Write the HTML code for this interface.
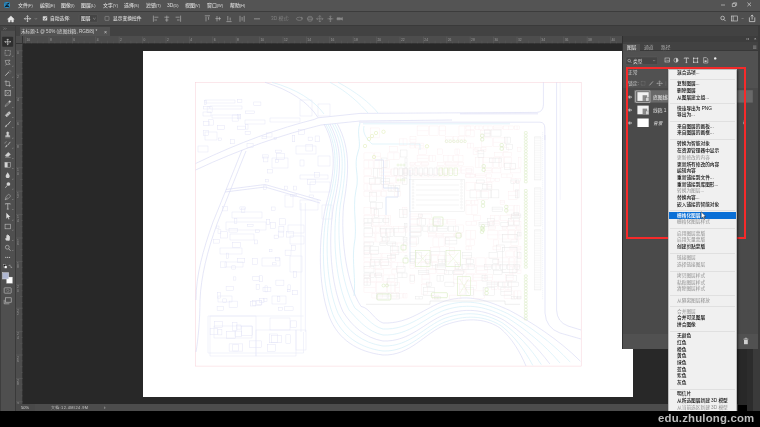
<!DOCTYPE html><html lang="zh"><head><meta charset="utf-8"><title>Photoshop</title>
<style>
*{box-sizing:border-box;margin:0;padding:0}
html,body{width:760px;height:427px;overflow:hidden;background:#000}
body{position:relative;font-family:"Liberation Sans","Noto Sans CJK SC",sans-serif;font-size:4.75px;color:#d6d6d6;line-height:1}
.abs{position:absolute}
svg{will-change:transform}
.t{position:absolute;white-space:nowrap;line-height:1;will-change:transform}
#menubar{left:0;top:0;width:760px;height:10.6px;background:#545454}
#optbar{left:0;top:10.6px;width:760px;height:15.6px;background:#4f4f4f;border-top:0.6px solid #3c3c3c;border-bottom:0.6px solid #3a3a3a}
#tabbar{left:15.6px;top:26.2px;width:744.4px;height:10px;background:#424242}
#tab{left:19.5px;top:26.6px;width:90.5px;height:9.6px;background:#535353}
#hruler{left:15.6px;top:36.2px;width:606.6px;height:7.4px;background:#4d4d4d;border-bottom:0.5px solid #333}
#vruler{left:15.6px;top:36.2px;width:7.4px;height:368px;background:#4d4d4d;border-right:0.5px solid #333}
#toolbar{left:0;top:26.2px;width:15.6px;height:385px;background:#4f4f4f;border-right:0.6px solid #3a3a3a;border-left:0.9px solid #3e3e3e}
#canvas{left:23px;top:43.6px;width:737px;height:361px;background:#282828}
#doc{left:142.6px;top:50.8px;width:490.9px;height:346.6px;background:#fff}
#status{left:15.6px;top:404.1px;width:722px;height:7.2px;background:#4c4c4c}
#black{left:0;top:411.3px;width:760px;height:16px;background:#000}
#panel{left:622.3px;top:36.2px;width:136px;height:313px;background:#4a4a4a;border-left:0.6px solid #303030}
#rstrip{left:758.3px;top:26.2px;width:2px;height:385px;background:#3a3a3a}
#ctx{left:667.8px;top:69.2px;width:69.6px;height:343px;background:#f0f0f0;border:0.4px solid #bdbdbd;color:#0c0c0c;box-shadow:1.2px 1.2px 2px rgba(0,0,0,.55)}
#ctx .i{will-change:transform;position:absolute;left:7.9px;white-space:nowrap;font-size:4.7px;font-weight:500;line-height:6.68px;height:6.68px}
#ctx .g{color:#8e8e8e;font-weight:400}
#ctx .s{position:absolute;left:1.4px;right:1.4px;height:0.6px;background:#e0e0e0}
#ctx .hl{position:absolute;left:0.6px;right:0.6px;background:#0a6fd6;height:6.5px}
</style></head><body>
<div class="abs" id="canvas"></div>
<div class="abs" id="doc"></div>
<svg class="abs" style="left:0;top:0;opacity:0.56" width="760" height="427" viewBox="0 0 760 427" fill="none">
<rect x="195.6" y="82.3" width="385.6" height="283.8" stroke="#f0a8b8" stroke-width="0.5"/>
<g stroke-width="0.6">
<path d="M195.6 163.5 C240 142 280 128 314 119.5 L318 117.8 L360 113.4 L537 112.4 Q543 112 543.4 105 L543.4 82.3" stroke="#b4b7ea"/>
<path d="M195.6 170 C240 149 285 134 321 125 L360 121 L452 120" stroke="#b4b7ea"/>
<path d="M460 113.8 L538 113.8" stroke="#b4b7ea"/>
<path d="M265 82.3 C290 90 308 102 318 117.5" stroke="#b4b7ea"/>
<path d="M272 82.3 C296 89 314 100 324 114" stroke="#a8def2"/>
<path d="M330 82.3 C348 92 360 104 368 113" stroke="#a8def2"/>
<path d="M338 82.3 C356 92 370 103 378 113" stroke="#a8def2"/>
<path d="M324.0 124 C338.0 150 334.0 175 326.0 205 C318.0 240 318.0 285 329.0 316.0 C338.0 340.0 358.0 352.0 383 355.0 C410 356.0 425 333.0 445 325.0 C470 316.0 488 320.0 500.0 328.0 C512.0 338.0 520.0 352.0 526.0 366.0" stroke="#b4b7ea"/>
<path d="M325.7 124 C339.7 150 335.8 175 328.2 205 C320.8 240 321.6 285 333.0 314.8 C342.0 336.0 360.0 348.0 383 351.0 C410 352.0 425 329.8 445 322.0 C470 313.2 488 317.6 501.2 325.8 C514.4 336.0 524.8 350.4 532.8 365.4" stroke="#a8def2"/>
<path d="M327.8 124 C341.8 150 338.1 175 330.9 205 C324.3 240 326.1 285 338.0 313.3 C347.0 331.0 362.5 343.0 383 346.0 C410 347.0 425 325.8 445 318.2 C470 309.7 488 314.6 502.7 323.1 C517.4 333.5 530.8 348.4 541.3 364.6" stroke="#a8def2"/>
<path d="M329.9 124 C343.9 150 340.3 175 333.7 205 C327.8 240 330.6 285 343.0 311.8 C352.0 326.0 365.0 338.0 383 341.0 C410 342.0 425 321.8 445 314.5 C470 306.2 488 311.6 504.2 320.3 C520.4 331.0 536.8 346.4 549.8 363.9" stroke="#b4b7ea"/>
<path d="M332.4 124 C346.4 150 343.0 175 337.0 205 C332.0 240 336.0 285 349.0 310.0 C358.0 320.0 368.0 332.0 383 335.0 C410 336.0 425 317.0 445 310.0 C470 302.0 488 308.0 506.0 317.0 C524.0 328.0 544.0 344.0 560.0 363.0" stroke="#a8def2"/>
<path d="M334.9 124 C348.9 150 345.7 175 340.3 205 C336.2 240 341.4 285 355.0 308.2 C364.0 314.0 371.0 326.0 383 329.0 C410 330.0 425 312.2 445 305.5 C470 297.8 488 304.4 507.8 313.7 C527.6 325.0 551.2 341.6 570.2 362.1" stroke="#a8def2"/>
<path d="M337.4 124 C351.4 150 348.4 175 343.6 205 C340.4 240 346.8 285 361.0 306.4 C370.0 308.0 374.0 320.0 383 323.0 C410 324.0 425 307.4 445 301.0 C470 293.6 488 300.8 509.6 310.4 C531.2 322.0 558.4 339.2 580.4 361.2" stroke="#b4b7ea"/>
<path d="M242 150 C232 175 222 200 213 222 C203 250 196 275 196 300" stroke="#b4b7ea"/>
<path d="M246 151 C236 176 226 201 217 224 C207 252 201 277 200 300 C200 320 198 340 196 352" stroke="#b4b7ea"/>
<path d="M226 189.5 L265 184.5 L321 200.5" stroke="#b4b7ea"/>
<path d="M225 192 L265 187 L320 203" stroke="#b4b7ea"/>
<path d="M556.6 82.3 L556.6 310 Q557 322 568 326 L581 330" stroke="#b4b7ea"/>
<path d="M560.2 82.3 L560.2 200" stroke="#b4b7ea" stroke-width="0.3"/>
<path d="M545 135 L545 313 Q546 328 560 333 L581 339" stroke="#b4b7ea"/>
<path d="M359 122.2 L540 122.2 Q544.8 122.4 544.8 128 L544.8 140" stroke="#b4b7ea"/>
<path d="M363 123.8 L510 123.8" stroke="#a8def2"/>
<path d="M366 304.3 L430 304.3 L430 301 L505 301 L505 304.3 L520 304.3" stroke="#cccccc"/>
<path d="M360 123 C356 135 362 142 358 152 C353 166 360 176 356 190 C352 210 358 226 354 246 C352 262 356 280 354 296" stroke="#a8def2" stroke-width="0.7"/>
<path d="M364 126 C362 134 368 140 372 144 L420 144 L420 150" stroke="#a8def2" stroke-width="0.6"/>
<path d="M375 160 L383.5 160 L383.5 188 L398 188 L398 197 L386 197 L386 215" stroke="#b4c8ee" stroke-width="0.8"/>
<path d="M410 170 L410 262" stroke="#b4c8ee" stroke-width="0.6"/>
</g>
<g stroke="#c6c9ee" stroke-width="0.4">
<rect x="205" y="100" width="30" height="3"/>
<rect x="210" y="106" width="32" height="3"/>
<rect x="203" y="112" width="8" height="4"/>
<rect x="212" y="115" width="28" height="3"/>
<rect x="245" y="120" width="20" height="4"/>
<rect x="270" y="118" width="30" height="4"/>
<rect x="300" y="100" width="12" height="16"/>
<rect x="318" y="104" width="12" height="12"/>
<rect x="205" y="132" width="12" height="8"/>
<rect x="198" y="146" width="10" height="6"/>
<rect x="272" y="158" width="16" height="10"/>
<rect x="296" y="146" width="20" height="8"/>
<rect x="300" y="160" width="4" height="6"/>
<rect x="318" y="156" width="12" height="10"/>
<rect x="300" y="175" width="28" height="4"/>
<rect x="310" y="182" width="20" height="10"/>
<rect x="285" y="195" width="8" height="12"/>
<rect x="300" y="200" width="18" height="10"/>
<rect x="322" y="205" width="10" height="14"/>
<rect x="232" y="212" width="30" height="6"/>
<rect x="226" y="222" width="40" height="8"/>
<rect x="230" y="234" width="24" height="6"/>
<rect x="288" y="225" width="16" height="8"/>
<rect x="290" y="236" width="14" height="8"/>
<rect x="220" y="248" width="22" height="6"/>
<rect x="262" y="258" width="18" height="8"/>
<rect x="290" y="256" width="12" height="16"/>
<rect x="225" y="262" width="18" height="5"/>
<rect x="218" y="296" width="14" height="6"/>
<rect x="272" y="296" width="14" height="8"/>
<rect x="210" y="316" width="46" height="40"/>
<rect x="256" y="330" width="40" height="26"/>
<rect x="270" y="318" width="20" height="12"/>
<rect x="296" y="330" width="10" height="20"/>
<rect x="214" y="326" width="38" height="12"/>
<rect x="237.6" y="99.7" width="4.3" height="2.6"/>
<rect x="203.3" y="121.6" width="5.8" height="3.6"/>
<rect x="204.2" y="100.5" width="2.3" height="3.9"/>
<rect x="207.1" y="106.8" width="5.0" height="5.6"/>
<rect x="232.1" y="115.0" width="6.4" height="6.1"/>
<rect x="245.6" y="111.0" width="8.8" height="2.2"/>
<rect x="218.2" y="138.0" width="3.0" height="2.5"/>
<rect x="237.5" y="114.4" width="3.3" height="4.5"/>
<rect x="203.3" y="106.7" width="5.8" height="2.3"/>
<rect x="217.4" y="125.4" width="6.8" height="3.8"/>
<rect x="245.1" y="131.4" width="5.2" height="3.3"/>
<rect x="230.6" y="139.3" width="3.7" height="4.5"/>
<rect x="253.8" y="102.0" width="7.1" height="3.2"/>
<rect x="208.7" y="119.8" width="4.9" height="5.3"/>
<rect x="245.7" y="124.2" width="2.3" height="4.9"/>
<rect x="237.5" y="126.1" width="8.1" height="3.3"/>
<rect x="247.0" y="143.3" width="6.1" height="4.0"/>
<rect x="203.4" y="130.5" width="5.3" height="4.9"/>
<rect x="305.9" y="144.7" width="6.5" height="6.3"/>
<rect x="263.2" y="157.0" width="4.7" height="4.9"/>
<rect x="265.4" y="179.4" width="3.2" height="2.5"/>
<rect x="284.3" y="186.1" width="2.9" height="3.1"/>
<rect x="293.6" y="186.1" width="2.6" height="3.9"/>
<rect x="276.6" y="153.5" width="7.7" height="5.7"/>
<rect x="315.1" y="136.0" width="4.5" height="5.8"/>
<rect x="275.2" y="159.5" width="3.2" height="3.0"/>
<rect x="262.2" y="154.9" width="6.1" height="3.1"/>
<rect x="314.8" y="172.7" width="4.6" height="4.4"/>
<rect x="298.8" y="129.6" width="5.6" height="4.7"/>
<rect x="307.2" y="179.2" width="8.3" height="5.4"/>
<rect x="267.7" y="169.3" width="4.7" height="3.7"/>
<rect x="274.0" y="137.3" width="2.4" height="2.3"/>
<rect x="262.0" y="136.6" width="4.4" height="2.2"/>
<rect x="263.5" y="185.8" width="2.7" height="3.6"/>
<rect x="275.5" y="150.1" width="6.3" height="2.6"/>
<rect x="309.1" y="195.0" width="4.5" height="2.5"/>
<rect x="266.7" y="132.9" width="5.3" height="4.1"/>
<rect x="308.1" y="137.1" width="4.4" height="3.1"/>
<rect x="292.6" y="135.7" width="2.2" height="6.1"/>
<rect x="290.6" y="194.4" width="5.8" height="2.1"/>
<rect x="232.4" y="242.4" width="8.0" height="5.0"/>
<rect x="256.1" y="284.2" width="3.2" height="5.3"/>
<rect x="278.3" y="307.5" width="4.3" height="3.0"/>
<rect x="275.9" y="280.1" width="8.0" height="5.5"/>
<rect x="241.3" y="208.0" width="3.6" height="4.2"/>
<rect x="233.7" y="276.9" width="2.2" height="3.2"/>
<rect x="284.4" y="306.8" width="8.7" height="3.9"/>
<rect x="229.0" y="228.5" width="8.7" height="3.6"/>
<rect x="263.6" y="298.7" width="3.4" height="2.9"/>
<rect x="263.0" y="287.3" width="7.9" height="4.1"/>
<rect x="287.9" y="284.9" width="2.6" height="4.8"/>
<rect x="226.1" y="286.2" width="7.3" height="4.1"/>
<rect x="291.4" y="245.2" width="4.3" height="5.4"/>
<rect x="270.8" y="222.2" width="4.8" height="6.1"/>
<rect x="287.2" y="289.2" width="2.9" height="2.6"/>
<rect x="293.3" y="271.7" width="3.0" height="5.6"/>
<rect x="222.7" y="206.5" width="4.5" height="4.4"/>
<rect x="252.7" y="300.4" width="8.8" height="4.8"/>
<rect x="278.9" y="226.4" width="5.0" height="5.7"/>
<rect x="231.8" y="265.8" width="3.8" height="3.3"/>
<rect x="222.8" y="298.9" width="3.8" height="3.8"/>
<rect x="259.6" y="298.2" width="4.5" height="4.0"/>
<rect x="252.7" y="258.7" width="4.9" height="5.9"/>
<rect x="247.4" y="224.2" width="5.7" height="2.1"/>
<rect x="226.5" y="253.1" width="2.0" height="5.4"/>
<rect x="237.7" y="258.2" width="7.1" height="4.4"/>
<rect x="220.5" y="261.9" width="5.9" height="5.4"/>
<rect x="275.5" y="257.7" width="3.7" height="3.2"/>
<rect x="285.1" y="250.1" width="5.9" height="5.3"/>
<rect x="252.8" y="276.2" width="6.3" height="4.2"/>
<rect x="250.6" y="301.7" width="5.2" height="4.3"/>
<rect x="286.5" y="231.3" width="6.9" height="5.8"/>
<rect x="279.3" y="218.8" width="5.9" height="6.1"/>
<rect x="218.0" y="229.8" width="2.9" height="3.9"/>
<rect x="277.4" y="296.6" width="2.5" height="4.9"/>
<rect x="266.7" y="219.6" width="3.1" height="5.1"/>
<rect x="229.1" y="301.1" width="8.2" height="6.2"/>
<rect x="292.4" y="290.7" width="4.8" height="4.1"/>
<rect x="254.7" y="240.0" width="3.1" height="3.9"/>
<rect x="271.7" y="207.0" width="3.4" height="3.4"/>
<rect x="213.4" y="239.2" width="5.9" height="3.9"/>
<rect x="217.1" y="306.3" width="6.4" height="4.2"/>
<rect x="220.2" y="231.8" width="7.5" height="6.2"/>
<rect x="234.6" y="218.2" width="2.3" height="5.3"/>
<rect x="278.4" y="231.1" width="5.0" height="5.9"/>
<rect x="259.3" y="275.8" width="3.0" height="6.0"/>
<rect x="269.4" y="249.6" width="2.6" height="2.2"/>
<rect x="265.0" y="285.9" width="2.5" height="6.0"/>
<rect x="217.6" y="292.4" width="2.6" height="5.7"/>
<rect x="256.7" y="300.9" width="5.2" height="3.5"/>
<rect x="255.3" y="229.9" width="3.9" height="2.6"/>
<rect x="216.2" y="226.0" width="2.8" height="2.7"/>
<rect x="274.1" y="235.1" width="4.2" height="3.3"/>
<rect x="239.9" y="206.9" width="5.5" height="2.8"/>
<rect x="272.3" y="262.8" width="3.8" height="2.1"/>
<rect x="290.5" y="320.9" width="5.9" height="6.8"/>
<rect x="249.5" y="340.9" width="12.2" height="6.5"/>
<rect x="267.8" y="344.6" width="7.9" height="6.9"/>
<rect x="269.8" y="334.0" width="7.4" height="8.8"/>
<rect x="214.6" y="321.6" width="8.0" height="6.0"/>
<rect x="232.3" y="322.2" width="4.7" height="8.3"/>
<rect x="285.9" y="334.8" width="4.8" height="8.9"/>
<rect x="235.0" y="331.1" width="6.8" height="5.4"/>
<rect x="232.8" y="344.4" width="5.6" height="6.6"/>
<rect x="229.1" y="343.9" width="13.7" height="7.2"/>
<rect x="210.1" y="328.7" width="7.1" height="6.1"/>
<rect x="226.7" y="331.7" width="8.7" height="6.9"/>
<rect x="217.9" y="329.4" width="4.0" height="5.5"/>
<rect x="236.6" y="325.0" width="4.4" height="4.1"/>
<rect x="271.7" y="335.7" width="9.9" height="7.1"/>
<rect x="241.5" y="326.1" width="11.2" height="9.1"/>
<path d="M301 203 V332 M305.4 203 V332 M303.5 316 H208 V353 H303.5 V332"/>
</g>
<rect x="370.2" y="128.0" width="9.1" height="9.9" stroke="#f5d9de" stroke-width="0.35"/>
<rect x="399.4" y="138.9" width="7.6" height="6.5" stroke="#f5d9de" stroke-width="0.35"/>
<path d="M403.2 138.9 V145.4" stroke="#f5d9de" stroke-width="0.35"/>
<rect x="389.3" y="146.4" width="7.9" height="5.5" stroke="#f5d9de" stroke-width="0.35"/>
<rect x="364.0" y="152.9" width="9.3" height="6.7" stroke="#f5d9de" stroke-width="0.35"/>
<rect x="374.3" y="152.9" width="6.0" height="6.7" stroke="#f5d9de" stroke-width="0.35"/>
<path d="M374.3 156.3 H380.3" stroke="#f5d9de" stroke-width="0.35"/>
<rect x="387.9" y="152.9" width="11.8" height="6.7" stroke="#f5d9de" stroke-width="0.35"/>
<path d="M393.8 152.9 V159.7" stroke="#f5d9de" stroke-width="0.35"/>
<rect x="364.0" y="160.7" width="9.1" height="7.3" stroke="#f5d9de" stroke-width="0.35"/>
<path d="M368.6 160.7 V168.0" stroke="#f5d9de" stroke-width="0.35"/>
<rect x="374.1" y="160.7" width="9.9" height="7.3" stroke="#f5d9de" stroke-width="0.35"/>
<path d="M379.1 160.7 V168.0" stroke="#f5d9de" stroke-width="0.35"/>
<rect x="385.1" y="160.7" width="4.5" height="7.3" stroke="#f5d9de" stroke-width="0.35"/>
<rect x="364.0" y="169.0" width="7.7" height="6.3" stroke="#f5d9de" stroke-width="0.35"/>
<rect x="379.3" y="169.0" width="11.5" height="6.3" stroke="#f5d9de" stroke-width="0.35"/>
<path d="M379.3 172.1 H390.8" stroke="#f5d9de" stroke-width="0.35"/>
<rect x="391.8" y="169.0" width="11.7" height="6.3" stroke="#f5d9de" stroke-width="0.35"/>
<path d="M397.7 169.0 V175.3" stroke="#f5d9de" stroke-width="0.35"/>
<rect x="404.6" y="169.0" width="2.4" height="6.3" stroke="#f5d9de" stroke-width="0.35"/>
<path d="M405.8 169.0 V175.3" stroke="#f5d9de" stroke-width="0.35"/>
<rect x="364.0" y="176.3" width="11.6" height="6.7" stroke="#f5d9de" stroke-width="0.35"/>
<rect x="385.7" y="176.3" width="9.6" height="6.7" stroke="#f5d9de" stroke-width="0.35"/>
<rect x="396.3" y="176.3" width="7.9" height="6.7" stroke="#f5d9de" stroke-width="0.35"/>
<path d="M400.3 176.3 V182.9" stroke="#f5d9de" stroke-width="0.35"/>
<rect x="364.0" y="183.9" width="6.4" height="6.2" stroke="#f5d9de" stroke-width="0.35"/>
<path d="M367.2 183.9 V190.1" stroke="#f5d9de" stroke-width="0.35"/>
<rect x="371.4" y="183.9" width="10.7" height="6.2" stroke="#f5d9de" stroke-width="0.35"/>
<rect x="383.1" y="183.9" width="10.7" height="6.2" stroke="#f5d9de" stroke-width="0.35"/>
<rect x="364.0" y="191.1" width="7.0" height="5.0" stroke="#f5d9de" stroke-width="0.35"/>
<rect x="372.0" y="191.1" width="8.7" height="5.0" stroke="#f5d9de" stroke-width="0.35"/>
<path d="M376.3 191.1 V196.1" stroke="#f5d9de" stroke-width="0.35"/>
<rect x="381.7" y="191.1" width="4.4" height="5.0" stroke="#f5d9de" stroke-width="0.35"/>
<rect x="394.4" y="191.1" width="6.0" height="5.0" stroke="#f5d9de" stroke-width="0.35"/>
<path d="M397.4 191.1 V196.1" stroke="#f5d9de" stroke-width="0.35"/>
<rect x="364.0" y="207.3" width="6.3" height="7.5" stroke="#f5d9de" stroke-width="0.35"/>
<rect x="371.3" y="207.3" width="5.0" height="7.5" stroke="#f5d9de" stroke-width="0.35"/>
<path d="M373.8 207.3 V214.8" stroke="#f5d9de" stroke-width="0.35"/>
<rect x="402.7" y="207.3" width="4.3" height="7.5" stroke="#f5d9de" stroke-width="0.35"/>
<path d="M404.9 207.3 V214.8" stroke="#f5d9de" stroke-width="0.35"/>
<rect x="364.0" y="215.8" width="8.0" height="9.3" stroke="#f5d9de" stroke-width="0.35"/>
<rect x="373.0" y="215.8" width="12.0" height="9.3" stroke="#f5d9de" stroke-width="0.35"/>
<path d="M379.0 215.8 V225.2" stroke="#f5d9de" stroke-width="0.35"/>
<rect x="385.9" y="215.8" width="4.7" height="9.3" stroke="#f5d9de" stroke-width="0.35"/>
<path d="M388.3 215.8 V225.2" stroke="#f5d9de" stroke-width="0.35"/>
<rect x="372.3" y="226.2" width="7.0" height="5.9" stroke="#f5d9de" stroke-width="0.35"/>
<path d="M375.8 226.2 V232.1" stroke="#f5d9de" stroke-width="0.35"/>
<rect x="380.3" y="226.2" width="11.7" height="5.9" stroke="#f5d9de" stroke-width="0.35"/>
<path d="M380.3 229.1 H392.1" stroke="#f5d9de" stroke-width="0.35"/>
<rect x="393.1" y="226.2" width="10.9" height="5.9" stroke="#f5d9de" stroke-width="0.35"/>
<path d="M398.5 226.2 V232.1" stroke="#f5d9de" stroke-width="0.35"/>
<rect x="405.0" y="226.2" width="2.0" height="5.9" stroke="#f5d9de" stroke-width="0.35"/>
<rect x="364.0" y="233.1" width="11.0" height="8.9" stroke="#f5d9de" stroke-width="0.35"/>
<path d="M364.0 237.5 H375.0" stroke="#f5d9de" stroke-width="0.35"/>
<rect x="376.0" y="233.1" width="11.2" height="8.9" stroke="#f5d9de" stroke-width="0.35"/>
<path d="M381.6 233.1 V242.0" stroke="#f5d9de" stroke-width="0.35"/>
<rect x="364.0" y="243.0" width="6.0" height="9.8" stroke="#f5d9de" stroke-width="0.35"/>
<path d="M364.0 247.9 H370.0" stroke="#f5d9de" stroke-width="0.35"/>
<rect x="392.2" y="243.0" width="10.1" height="9.8" stroke="#f5d9de" stroke-width="0.35"/>
<path d="M397.3 243.0 V252.8" stroke="#f5d9de" stroke-width="0.35"/>
<rect x="403.3" y="243.0" width="3.7" height="9.8" stroke="#f5d9de" stroke-width="0.35"/>
<rect x="364.0" y="253.8" width="6.4" height="7.5" stroke="#f5d9de" stroke-width="0.35"/>
<path d="M364.0 257.6 H370.4" stroke="#f5d9de" stroke-width="0.35"/>
<rect x="371.4" y="253.8" width="9.6" height="7.5" stroke="#f5d9de" stroke-width="0.35"/>
<path d="M371.4 257.6 H381.0" stroke="#f5d9de" stroke-width="0.35"/>
<rect x="382.0" y="253.8" width="8.7" height="7.5" stroke="#f5d9de" stroke-width="0.35"/>
<path d="M382.0 257.6 H390.7" stroke="#f5d9de" stroke-width="0.35"/>
<rect x="391.7" y="253.8" width="4.1" height="7.5" stroke="#f5d9de" stroke-width="0.35"/>
<path d="M391.7 257.6 H395.8" stroke="#f5d9de" stroke-width="0.35"/>
<rect x="364.0" y="262.3" width="5.9" height="6.3" stroke="#f5d9de" stroke-width="0.35"/>
<rect x="370.9" y="262.3" width="9.6" height="6.3" stroke="#f5d9de" stroke-width="0.35"/>
<path d="M375.7 262.3 V268.6" stroke="#f5d9de" stroke-width="0.35"/>
<rect x="381.5" y="262.3" width="9.4" height="6.3" stroke="#f5d9de" stroke-width="0.35"/>
<path d="M381.5 265.5 H390.9" stroke="#f5d9de" stroke-width="0.35"/>
<rect x="391.9" y="262.3" width="11.4" height="6.3" stroke="#f5d9de" stroke-width="0.35"/>
<path d="M397.6 262.3 V268.6" stroke="#f5d9de" stroke-width="0.35"/>
<rect x="375.4" y="269.6" width="8.0" height="4.4" stroke="#f5d9de" stroke-width="0.35"/>
<rect x="391.9" y="269.6" width="5.8" height="4.4" stroke="#f5d9de" stroke-width="0.35"/>
<rect x="364.0" y="275.0" width="5.5" height="6.5" stroke="#f5d9de" stroke-width="0.35"/>
<path d="M364.0 278.3 H369.5" stroke="#f5d9de" stroke-width="0.35"/>
<rect x="370.5" y="275.0" width="11.6" height="6.5" stroke="#f5d9de" stroke-width="0.35"/>
<path d="M376.3 275.0 V281.5" stroke="#f5d9de" stroke-width="0.35"/>
<rect x="383.1" y="275.0" width="11.8" height="6.5" stroke="#f5d9de" stroke-width="0.35"/>
<path d="M389.0 275.0 V281.5" stroke="#f5d9de" stroke-width="0.35"/>
<rect x="364.0" y="282.5" width="11.5" height="10.0" stroke="#f5d9de" stroke-width="0.35"/>
<path d="M364.0 287.5 H375.5" stroke="#f5d9de" stroke-width="0.35"/>
<rect x="376.5" y="282.5" width="10.0" height="10.0" stroke="#f5d9de" stroke-width="0.35"/>
<rect x="387.4" y="282.5" width="7.0" height="10.0" stroke="#f5d9de" stroke-width="0.35"/>
<path d="M390.9 282.5 V292.5" stroke="#f5d9de" stroke-width="0.35"/>
<rect x="395.5" y="282.5" width="4.0" height="10.0" stroke="#f5d9de" stroke-width="0.35"/>
<path d="M395.5 287.5 H399.5" stroke="#f5d9de" stroke-width="0.35"/>
<rect x="371.9" y="293.5" width="10.6" height="4.5" stroke="#f5d9de" stroke-width="0.35"/>
<path d="M377.1 293.5 V297.9" stroke="#f5d9de" stroke-width="0.35"/>
<rect x="391.4" y="293.5" width="5.5" height="4.5" stroke="#f5d9de" stroke-width="0.35"/>
<rect x="398.0" y="293.5" width="4.2" height="4.5" stroke="#f5d9de" stroke-width="0.35"/>
<rect x="403.2" y="293.5" width="3.8" height="4.5" stroke="#f5d9de" stroke-width="0.35"/>
<path d="M405.1 293.5 V297.9" stroke="#f5d9de" stroke-width="0.35"/>
<rect x="417.1" y="126.0" width="11.2" height="9.4" stroke="#f5d9de" stroke-width="0.35"/>
<path d="M417.1 130.7 H428.2" stroke="#f5d9de" stroke-width="0.35"/>
<rect x="429.2" y="126.0" width="8.9" height="9.4" stroke="#f5d9de" stroke-width="0.35"/>
<rect x="439.2" y="126.0" width="6.5" height="9.4" stroke="#f5d9de" stroke-width="0.35"/>
<path d="M439.2 130.7 H445.7" stroke="#f5d9de" stroke-width="0.35"/>
<rect x="459.0" y="126.0" width="11.5" height="9.4" stroke="#f5d9de" stroke-width="0.35"/>
<path d="M464.8 126.0 V135.4" stroke="#f5d9de" stroke-width="0.35"/>
<rect x="410.0" y="136.4" width="6.0" height="5.7" stroke="#f5d9de" stroke-width="0.35"/>
<path d="M410.0 139.3 H416.0" stroke="#f5d9de" stroke-width="0.35"/>
<rect x="445.6" y="136.4" width="6.6" height="5.7" stroke="#f5d9de" stroke-width="0.35"/>
<path d="M445.6 139.3 H452.2" stroke="#f5d9de" stroke-width="0.35"/>
<rect x="453.2" y="136.4" width="4.6" height="5.7" stroke="#f5d9de" stroke-width="0.35"/>
<rect x="458.8" y="136.4" width="6.0" height="5.7" stroke="#f5d9de" stroke-width="0.35"/>
<path d="M458.8 139.3 H464.8" stroke="#f5d9de" stroke-width="0.35"/>
<rect x="410.0" y="143.1" width="4.7" height="4.9" stroke="#f5d9de" stroke-width="0.35"/>
<path d="M410.0 145.6 H414.7" stroke="#f5d9de" stroke-width="0.35"/>
<rect x="415.7" y="143.1" width="7.6" height="4.9" stroke="#f5d9de" stroke-width="0.35"/>
<path d="M415.7 145.6 H423.2" stroke="#f5d9de" stroke-width="0.35"/>
<rect x="467.7" y="143.1" width="5.6" height="4.9" stroke="#f5d9de" stroke-width="0.35"/>
<path d="M470.5 143.1 V148.0" stroke="#f5d9de" stroke-width="0.35"/>
<rect x="418.2" y="149.0" width="8.1" height="5.3" stroke="#f5d9de" stroke-width="0.35"/>
<rect x="437.5" y="149.0" width="4.8" height="5.3" stroke="#f5d9de" stroke-width="0.35"/>
<rect x="455.0" y="149.0" width="4.3" height="5.3" stroke="#f5d9de" stroke-width="0.35"/>
<path d="M457.2 149.0 V154.3" stroke="#f5d9de" stroke-width="0.35"/>
<rect x="473.1" y="149.0" width="3.9" height="5.3" stroke="#f5d9de" stroke-width="0.35"/>
<rect x="417.1" y="155.3" width="11.6" height="6.1" stroke="#f5d9de" stroke-width="0.35"/>
<path d="M417.1 158.4 H428.6" stroke="#f5d9de" stroke-width="0.35"/>
<rect x="429.6" y="155.3" width="5.7" height="6.1" stroke="#f5d9de" stroke-width="0.35"/>
<path d="M432.5 155.3 V161.4" stroke="#f5d9de" stroke-width="0.35"/>
<rect x="443.4" y="155.3" width="9.2" height="6.1" stroke="#f5d9de" stroke-width="0.35"/>
<path d="M448.0 155.3 V161.4" stroke="#f5d9de" stroke-width="0.35"/>
<rect x="453.6" y="155.3" width="9.4" height="6.1" stroke="#f5d9de" stroke-width="0.35"/>
<path d="M458.4 155.3 V161.4" stroke="#f5d9de" stroke-width="0.35"/>
<rect x="410.0" y="162.4" width="4.8" height="3.4" stroke="#f5d9de" stroke-width="0.35"/>
<path d="M410.0 164.1 H414.8" stroke="#f5d9de" stroke-width="0.35"/>
<rect x="415.8" y="162.4" width="4.7" height="3.4" stroke="#f5d9de" stroke-width="0.35"/>
<rect x="421.5" y="162.4" width="7.3" height="3.4" stroke="#f5d9de" stroke-width="0.35"/>
<path d="M421.5 164.1 H428.8" stroke="#f5d9de" stroke-width="0.35"/>
<rect x="437.3" y="162.4" width="6.9" height="3.4" stroke="#f5d9de" stroke-width="0.35"/>
<rect x="445.2" y="162.4" width="12.0" height="3.4" stroke="#f5d9de" stroke-width="0.35"/>
<path d="M445.2 164.1 H457.1" stroke="#f5d9de" stroke-width="0.35"/>
<rect x="458.1" y="162.4" width="5.6" height="3.4" stroke="#f5d9de" stroke-width="0.35"/>
<rect x="410.0" y="166.9" width="5.3" height="6.2" stroke="#f5d9de" stroke-width="0.35"/>
<path d="M410.0 170.0 H415.3" stroke="#f5d9de" stroke-width="0.35"/>
<rect x="416.3" y="166.9" width="11.3" height="6.2" stroke="#f5d9de" stroke-width="0.35"/>
<rect x="436.5" y="166.9" width="5.2" height="6.2" stroke="#f5d9de" stroke-width="0.35"/>
<path d="M436.5 170.0 H441.7" stroke="#f5d9de" stroke-width="0.35"/>
<rect x="442.7" y="166.9" width="4.9" height="6.2" stroke="#f5d9de" stroke-width="0.35"/>
<rect x="448.6" y="166.9" width="11.7" height="6.2" stroke="#f5d9de" stroke-width="0.35"/>
<path d="M448.6 170.0 H460.3" stroke="#f5d9de" stroke-width="0.35"/>
<rect x="461.3" y="166.9" width="11.8" height="6.2" stroke="#f5d9de" stroke-width="0.35"/>
<path d="M461.3 170.0 H473.1" stroke="#f5d9de" stroke-width="0.35"/>
<rect x="410.0" y="174.1" width="10.6" height="2.9" stroke="#f5d9de" stroke-width="0.35"/>
<rect x="421.6" y="174.1" width="5.8" height="2.9" stroke="#f5d9de" stroke-width="0.35"/>
<rect x="428.4" y="174.1" width="10.6" height="2.9" stroke="#f5d9de" stroke-width="0.35"/>
<path d="M433.7 174.1 V177.0" stroke="#f5d9de" stroke-width="0.35"/>
<rect x="440.0" y="174.1" width="8.1" height="2.9" stroke="#f5d9de" stroke-width="0.35"/>
<path d="M444.1 174.1 V177.0" stroke="#f5d9de" stroke-width="0.35"/>
<rect x="465.3" y="174.1" width="10.1" height="2.9" stroke="#f5d9de" stroke-width="0.35"/>
<rect x="466.0" y="126.0" width="8.8" height="3.8" stroke="#f5d9de" stroke-width="0.35"/>
<rect x="475.8" y="126.0" width="6.4" height="3.8" stroke="#f5d9de" stroke-width="0.35"/>
<path d="M479.0 126.0 V129.8" stroke="#f5d9de" stroke-width="0.35"/>
<rect x="483.2" y="126.0" width="9.3" height="3.8" stroke="#f5d9de" stroke-width="0.35"/>
<path d="M487.9 126.0 V129.8" stroke="#f5d9de" stroke-width="0.35"/>
<rect x="493.5" y="126.0" width="9.0" height="3.8" stroke="#f5d9de" stroke-width="0.35"/>
<path d="M493.5 127.9 H502.5" stroke="#f5d9de" stroke-width="0.35"/>
<rect x="503.5" y="126.0" width="10.2" height="3.8" stroke="#f5d9de" stroke-width="0.35"/>
<path d="M508.6 126.0 V129.8" stroke="#f5d9de" stroke-width="0.35"/>
<rect x="514.7" y="126.0" width="4.9" height="3.8" stroke="#f5d9de" stroke-width="0.35"/>
<path d="M517.1 126.0 V129.8" stroke="#f5d9de" stroke-width="0.35"/>
<rect x="466.0" y="130.8" width="8.1" height="6.1" stroke="#f5d9de" stroke-width="0.35"/>
<rect x="480.7" y="130.8" width="10.2" height="6.1" stroke="#f5d9de" stroke-width="0.35"/>
<path d="M480.7 133.9 H491.0" stroke="#f5d9de" stroke-width="0.35"/>
<rect x="481.5" y="137.9" width="11.3" height="8.7" stroke="#f5d9de" stroke-width="0.35"/>
<rect x="493.8" y="137.9" width="11.4" height="8.7" stroke="#f5d9de" stroke-width="0.35"/>
<path d="M493.8 142.3 H505.3" stroke="#f5d9de" stroke-width="0.35"/>
<rect x="475.0" y="147.6" width="5.7" height="4.0" stroke="#f5d9de" stroke-width="0.35"/>
<path d="M477.9 147.6 V151.6" stroke="#f5d9de" stroke-width="0.35"/>
<rect x="481.7" y="147.6" width="4.3" height="4.0" stroke="#f5d9de" stroke-width="0.35"/>
<path d="M481.7 149.6 H486.0" stroke="#f5d9de" stroke-width="0.35"/>
<rect x="503.8" y="147.6" width="4.9" height="4.0" stroke="#f5d9de" stroke-width="0.35"/>
<rect x="517.6" y="147.6" width="3.4" height="4.0" stroke="#f5d9de" stroke-width="0.35"/>
<rect x="494.2" y="152.6" width="8.6" height="3.7" stroke="#f5d9de" stroke-width="0.35"/>
<rect x="503.8" y="152.6" width="7.5" height="3.7" stroke="#f5d9de" stroke-width="0.35"/>
<rect x="475.7" y="157.4" width="6.5" height="9.9" stroke="#f5d9de" stroke-width="0.35"/>
<path d="M478.9 157.4 V167.2" stroke="#f5d9de" stroke-width="0.35"/>
<rect x="483.2" y="157.4" width="8.9" height="9.9" stroke="#f5d9de" stroke-width="0.35"/>
<path d="M483.2 162.3 H492.1" stroke="#f5d9de" stroke-width="0.35"/>
<rect x="493.1" y="157.4" width="5.1" height="9.9" stroke="#f5d9de" stroke-width="0.35"/>
<rect x="499.2" y="157.4" width="4.2" height="9.9" stroke="#f5d9de" stroke-width="0.35"/>
<path d="M501.3 157.4 V167.2" stroke="#f5d9de" stroke-width="0.35"/>
<rect x="504.4" y="157.4" width="6.9" height="9.9" stroke="#f5d9de" stroke-width="0.35"/>
<path d="M504.4 162.3 H511.2" stroke="#f5d9de" stroke-width="0.35"/>
<rect x="518.8" y="157.4" width="2.2" height="9.9" stroke="#f5d9de" stroke-width="0.35"/>
<rect x="466.0" y="168.2" width="5.2" height="4.7" stroke="#f5d9de" stroke-width="0.35"/>
<rect x="484.2" y="168.2" width="7.2" height="4.7" stroke="#f5d9de" stroke-width="0.35"/>
<path d="M484.2 170.6 H491.4" stroke="#f5d9de" stroke-width="0.35"/>
<rect x="492.4" y="168.2" width="8.5" height="4.7" stroke="#f5d9de" stroke-width="0.35"/>
<rect x="510.4" y="168.2" width="9.9" height="4.7" stroke="#f5d9de" stroke-width="0.35"/>
<rect x="466.0" y="174.0" width="8.3" height="3.3" stroke="#f5d9de" stroke-width="0.35"/>
<path d="M470.1 174.0 V177.3" stroke="#f5d9de" stroke-width="0.35"/>
<rect x="475.3" y="174.0" width="10.2" height="3.3" stroke="#f5d9de" stroke-width="0.35"/>
<path d="M475.3 175.6 H485.5" stroke="#f5d9de" stroke-width="0.35"/>
<rect x="486.5" y="174.0" width="5.1" height="3.3" stroke="#f5d9de" stroke-width="0.35"/>
<rect x="501.7" y="174.0" width="10.5" height="3.3" stroke="#f5d9de" stroke-width="0.35"/>
<path d="M506.9 174.0 V177.3" stroke="#f5d9de" stroke-width="0.35"/>
<rect x="486.5" y="178.3" width="7.6" height="3.0" stroke="#f5d9de" stroke-width="0.35"/>
<path d="M490.3 178.3 V181.3" stroke="#f5d9de" stroke-width="0.35"/>
<rect x="495.1" y="178.3" width="4.3" height="3.0" stroke="#f5d9de" stroke-width="0.35"/>
<rect x="511.0" y="178.3" width="9.7" height="3.0" stroke="#f5d9de" stroke-width="0.35"/>
<path d="M515.8 178.3 V181.3" stroke="#f5d9de" stroke-width="0.35"/>
<rect x="466.0" y="182.3" width="8.2" height="8.5" stroke="#f5d9de" stroke-width="0.35"/>
<rect x="475.2" y="182.3" width="11.7" height="8.5" stroke="#f5d9de" stroke-width="0.35"/>
<rect x="487.9" y="182.3" width="4.1" height="8.5" stroke="#f5d9de" stroke-width="0.35"/>
<path d="M487.9 186.6 H492.0" stroke="#f5d9de" stroke-width="0.35"/>
<rect x="513.2" y="182.3" width="6.6" height="8.5" stroke="#f5d9de" stroke-width="0.35"/>
<rect x="476.5" y="191.8" width="11.8" height="7.4" stroke="#f5d9de" stroke-width="0.35"/>
<rect x="508.5" y="191.8" width="8.6" height="7.4" stroke="#f5d9de" stroke-width="0.35"/>
<path d="M508.5 195.5 H517.0" stroke="#f5d9de" stroke-width="0.35"/>
<rect x="466.0" y="200.2" width="4.2" height="4.0" stroke="#f5d9de" stroke-width="0.35"/>
<rect x="471.2" y="200.2" width="6.8" height="4.0" stroke="#f5d9de" stroke-width="0.35"/>
<path d="M474.6 200.2 V204.3" stroke="#f5d9de" stroke-width="0.35"/>
<rect x="500.1" y="200.2" width="4.5" height="4.0" stroke="#f5d9de" stroke-width="0.35"/>
<path d="M500.1 202.2 H504.6" stroke="#f5d9de" stroke-width="0.35"/>
<rect x="466.0" y="205.3" width="11.6" height="9.4" stroke="#f5d9de" stroke-width="0.35"/>
<path d="M471.8 205.3 V214.7" stroke="#f5d9de" stroke-width="0.35"/>
<rect x="506.9" y="205.3" width="6.3" height="9.4" stroke="#f5d9de" stroke-width="0.35"/>
<path d="M506.9 210.0 H513.2" stroke="#f5d9de" stroke-width="0.35"/>
<rect x="514.2" y="205.3" width="5.6" height="9.4" stroke="#f5d9de" stroke-width="0.35"/>
<path d="M517.0 205.3 V214.7" stroke="#f5d9de" stroke-width="0.35"/>
<rect x="473.3" y="215.7" width="6.9" height="4.8" stroke="#f5d9de" stroke-width="0.35"/>
<rect x="490.2" y="215.7" width="8.9" height="4.8" stroke="#f5d9de" stroke-width="0.35"/>
<path d="M494.7 215.7 V220.5" stroke="#f5d9de" stroke-width="0.35"/>
<rect x="500.2" y="215.7" width="10.2" height="4.8" stroke="#f5d9de" stroke-width="0.35"/>
<rect x="511.4" y="215.7" width="8.3" height="4.8" stroke="#f5d9de" stroke-width="0.35"/>
<rect x="466.0" y="221.5" width="10.6" height="3.6" stroke="#f5d9de" stroke-width="0.35"/>
<path d="M471.3 221.5 V225.1" stroke="#f5d9de" stroke-width="0.35"/>
<rect x="488.7" y="221.5" width="4.0" height="3.6" stroke="#f5d9de" stroke-width="0.35"/>
<path d="M488.7 223.3 H492.7" stroke="#f5d9de" stroke-width="0.35"/>
<rect x="493.7" y="221.5" width="5.5" height="3.6" stroke="#f5d9de" stroke-width="0.35"/>
<path d="M493.7 223.3 H499.2" stroke="#f5d9de" stroke-width="0.35"/>
<rect x="507.3" y="221.5" width="6.3" height="3.6" stroke="#f5d9de" stroke-width="0.35"/>
<rect x="514.5" y="221.5" width="6.5" height="3.6" stroke="#f5d9de" stroke-width="0.35"/>
<rect x="488.6" y="226.1" width="6.8" height="3.6" stroke="#f5d9de" stroke-width="0.35"/>
<path d="M488.6 227.9 H495.4" stroke="#f5d9de" stroke-width="0.35"/>
<rect x="502.1" y="226.1" width="4.2" height="3.6" stroke="#f5d9de" stroke-width="0.35"/>
<path d="M502.1 227.9 H506.3" stroke="#f5d9de" stroke-width="0.35"/>
<rect x="507.3" y="226.1" width="8.0" height="3.6" stroke="#f5d9de" stroke-width="0.35"/>
<rect x="516.3" y="226.1" width="4.7" height="3.6" stroke="#f5d9de" stroke-width="0.35"/>
<path d="M516.3 227.9 H521.0" stroke="#f5d9de" stroke-width="0.35"/>
<rect x="466.0" y="230.7" width="9.2" height="8.3" stroke="#f5d9de" stroke-width="0.35"/>
<path d="M470.6 230.7 V238.9" stroke="#f5d9de" stroke-width="0.35"/>
<rect x="487.9" y="230.7" width="9.9" height="8.3" stroke="#f5d9de" stroke-width="0.35"/>
<path d="M487.9 234.8 H497.9" stroke="#f5d9de" stroke-width="0.35"/>
<rect x="498.9" y="230.7" width="8.6" height="8.3" stroke="#f5d9de" stroke-width="0.35"/>
<path d="M498.9 234.8 H507.5" stroke="#f5d9de" stroke-width="0.35"/>
<rect x="508.5" y="230.7" width="5.9" height="8.3" stroke="#f5d9de" stroke-width="0.35"/>
<path d="M508.5 234.8 H514.4" stroke="#f5d9de" stroke-width="0.35"/>
<rect x="515.4" y="230.7" width="5.6" height="8.3" stroke="#f5d9de" stroke-width="0.35"/>
<path d="M518.2 230.7 V238.9" stroke="#f5d9de" stroke-width="0.35"/>
<rect x="466.0" y="239.9" width="8.2" height="5.3" stroke="#f5d9de" stroke-width="0.35"/>
<path d="M470.1 239.9 V245.2" stroke="#f5d9de" stroke-width="0.35"/>
<rect x="493.8" y="239.9" width="4.8" height="5.3" stroke="#f5d9de" stroke-width="0.35"/>
<rect x="511.0" y="239.9" width="7.5" height="5.3" stroke="#f5d9de" stroke-width="0.35"/>
<rect x="466.0" y="246.2" width="5.7" height="3.7" stroke="#f5d9de" stroke-width="0.35"/>
<path d="M468.8 246.2 V250.0" stroke="#f5d9de" stroke-width="0.35"/>
<rect x="493.0" y="246.2" width="7.7" height="3.7" stroke="#f5d9de" stroke-width="0.35"/>
<rect x="509.9" y="246.2" width="11.1" height="3.7" stroke="#f5d9de" stroke-width="0.35"/>
<path d="M509.9 248.1 H521.0" stroke="#f5d9de" stroke-width="0.35"/>
<rect x="505.9" y="251.0" width="7.6" height="5.9" stroke="#f5d9de" stroke-width="0.35"/>
<rect x="514.5" y="251.0" width="4.8" height="5.9" stroke="#f5d9de" stroke-width="0.35"/>
<rect x="466.0" y="257.9" width="9.0" height="8.0" stroke="#f5d9de" stroke-width="0.35"/>
<path d="M470.5 257.9 V265.9" stroke="#f5d9de" stroke-width="0.35"/>
<rect x="476.0" y="257.9" width="9.0" height="8.0" stroke="#f5d9de" stroke-width="0.35"/>
<rect x="486.0" y="257.9" width="11.4" height="8.0" stroke="#f5d9de" stroke-width="0.35"/>
<rect x="498.5" y="257.9" width="10.2" height="8.0" stroke="#f5d9de" stroke-width="0.35"/>
<path d="M498.5 261.9 H508.7" stroke="#f5d9de" stroke-width="0.35"/>
<rect x="509.7" y="257.9" width="4.3" height="8.0" stroke="#f5d9de" stroke-width="0.35"/>
<path d="M509.7 261.9 H514.0" stroke="#f5d9de" stroke-width="0.35"/>
<rect x="515.0" y="257.9" width="6.0" height="8.0" stroke="#f5d9de" stroke-width="0.35"/>
<path d="M515.0 261.9 H521.0" stroke="#f5d9de" stroke-width="0.35"/>
<rect x="466.0" y="266.9" width="9.7" height="6.8" stroke="#f5d9de" stroke-width="0.35"/>
<rect x="476.7" y="266.9" width="10.6" height="6.8" stroke="#f5d9de" stroke-width="0.35"/>
<path d="M476.7 270.3 H487.4" stroke="#f5d9de" stroke-width="0.35"/>
<rect x="509.2" y="266.9" width="6.8" height="6.8" stroke="#f5d9de" stroke-width="0.35"/>
<path d="M512.6 266.9 V273.7" stroke="#f5d9de" stroke-width="0.35"/>
<rect x="517.0" y="266.9" width="4.0" height="6.8" stroke="#f5d9de" stroke-width="0.35"/>
<path d="M517.0 270.3 H521.0" stroke="#f5d9de" stroke-width="0.35"/>
<rect x="466.0" y="274.7" width="6.1" height="5.5" stroke="#f5d9de" stroke-width="0.35"/>
<rect x="473.1" y="274.7" width="11.5" height="5.5" stroke="#f5d9de" stroke-width="0.35"/>
<path d="M473.1 277.4 H484.6" stroke="#f5d9de" stroke-width="0.35"/>
<rect x="485.6" y="274.7" width="7.1" height="5.5" stroke="#f5d9de" stroke-width="0.35"/>
<path d="M485.6 277.4 H492.8" stroke="#f5d9de" stroke-width="0.35"/>
<rect x="505.3" y="274.7" width="7.8" height="5.5" stroke="#f5d9de" stroke-width="0.35"/>
<path d="M505.3 277.4 H513.0" stroke="#f5d9de" stroke-width="0.35"/>
<rect x="466.0" y="281.1" width="10.5" height="8.7" stroke="#f5d9de" stroke-width="0.35"/>
<path d="M466.0 285.5 H476.5" stroke="#f5d9de" stroke-width="0.35"/>
<rect x="491.4" y="281.1" width="6.1" height="8.7" stroke="#f5d9de" stroke-width="0.35"/>
<path d="M494.4 281.1 V289.9" stroke="#f5d9de" stroke-width="0.35"/>
<rect x="498.5" y="281.1" width="5.5" height="8.7" stroke="#f5d9de" stroke-width="0.35"/>
<rect x="505.0" y="281.1" width="6.2" height="8.7" stroke="#f5d9de" stroke-width="0.35"/>
<path d="M508.1 281.1 V289.9" stroke="#f5d9de" stroke-width="0.35"/>
<rect x="473.9" y="290.9" width="10.8" height="7.6" stroke="#f5d9de" stroke-width="0.35"/>
<rect x="504.1" y="290.9" width="9.1" height="7.6" stroke="#f5d9de" stroke-width="0.35"/>
<path d="M504.1 294.7 H513.2" stroke="#f5d9de" stroke-width="0.35"/>
<rect x="514.2" y="290.9" width="6.8" height="7.6" stroke="#f5d9de" stroke-width="0.35"/>
<path d="M517.6 290.9 V298.5" stroke="#f5d9de" stroke-width="0.35"/>
<rect x="410.0" y="214.0" width="10.2" height="4.6" stroke="#f5d9de" stroke-width="0.35"/>
<path d="M410.0 216.3 H420.2" stroke="#f5d9de" stroke-width="0.35"/>
<rect x="421.2" y="214.0" width="10.3" height="4.6" stroke="#f5d9de" stroke-width="0.35"/>
<rect x="410.0" y="219.6" width="9.5" height="4.4" stroke="#f5d9de" stroke-width="0.35"/>
<rect x="429.1" y="219.6" width="8.4" height="4.4" stroke="#f5d9de" stroke-width="0.35"/>
<path d="M433.3 219.6 V224.0" stroke="#f5d9de" stroke-width="0.35"/>
<rect x="438.5" y="219.6" width="7.9" height="4.4" stroke="#f5d9de" stroke-width="0.35"/>
<path d="M442.5 219.6 V224.0" stroke="#f5d9de" stroke-width="0.35"/>
<rect x="447.4" y="219.6" width="7.9" height="4.4" stroke="#f5d9de" stroke-width="0.35"/>
<path d="M447.4 221.8 H455.4" stroke="#f5d9de" stroke-width="0.35"/>
<rect x="410.0" y="225.0" width="10.7" height="7.7" stroke="#f5d9de" stroke-width="0.35"/>
<path d="M410.0 228.8 H420.7" stroke="#f5d9de" stroke-width="0.35"/>
<rect x="427.3" y="225.0" width="9.1" height="7.7" stroke="#f5d9de" stroke-width="0.35"/>
<rect x="455.5" y="225.0" width="8.1" height="7.7" stroke="#f5d9de" stroke-width="0.35"/>
<rect x="428.5" y="233.7" width="6.9" height="3.2" stroke="#f5d9de" stroke-width="0.35"/>
<path d="M428.5 235.3 H435.4" stroke="#f5d9de" stroke-width="0.35"/>
<rect x="436.4" y="233.7" width="5.7" height="3.2" stroke="#f5d9de" stroke-width="0.35"/>
<path d="M436.4 235.3 H442.1" stroke="#f5d9de" stroke-width="0.35"/>
<rect x="443.1" y="233.7" width="10.6" height="3.2" stroke="#f5d9de" stroke-width="0.35"/>
<rect x="454.7" y="233.7" width="7.2" height="3.2" stroke="#f5d9de" stroke-width="0.35"/>
<path d="M454.7 235.3 H461.9" stroke="#f5d9de" stroke-width="0.35"/>
<rect x="410.0" y="237.9" width="6.6" height="8.5" stroke="#f5d9de" stroke-width="0.35"/>
<path d="M410.0 242.2 H416.6" stroke="#f5d9de" stroke-width="0.35"/>
<rect x="433.0" y="237.9" width="11.1" height="8.5" stroke="#f5d9de" stroke-width="0.35"/>
<path d="M438.6 237.9 V246.5" stroke="#f5d9de" stroke-width="0.35"/>
<rect x="445.1" y="237.9" width="4.0" height="8.5" stroke="#f5d9de" stroke-width="0.35"/>
<rect x="430.5" y="247.5" width="9.4" height="7.3" stroke="#f5d9de" stroke-width="0.35"/>
<rect x="449.6" y="247.5" width="4.8" height="7.3" stroke="#f5d9de" stroke-width="0.35"/>
<path d="M449.6 251.1 H454.4" stroke="#f5d9de" stroke-width="0.35"/>
<rect x="421.6" y="255.7" width="8.5" height="5.6" stroke="#f5d9de" stroke-width="0.35"/>
<path d="M425.8 255.7 V261.3" stroke="#f5d9de" stroke-width="0.35"/>
<rect x="431.1" y="255.7" width="6.5" height="5.6" stroke="#f5d9de" stroke-width="0.35"/>
<rect x="438.6" y="255.7" width="11.5" height="5.6" stroke="#f5d9de" stroke-width="0.35"/>
<path d="M444.4 255.7 V261.3" stroke="#f5d9de" stroke-width="0.35"/>
<rect x="410.0" y="262.3" width="4.1" height="6.1" stroke="#f5d9de" stroke-width="0.35"/>
<path d="M410.0 265.4 H414.1" stroke="#f5d9de" stroke-width="0.35"/>
<rect x="415.1" y="262.3" width="11.8" height="6.1" stroke="#f5d9de" stroke-width="0.35"/>
<path d="M421.0 262.3 V268.4" stroke="#f5d9de" stroke-width="0.35"/>
<rect x="428.0" y="262.3" width="9.2" height="6.1" stroke="#f5d9de" stroke-width="0.35"/>
<path d="M432.5 262.3 V268.4" stroke="#f5d9de" stroke-width="0.35"/>
<rect x="454.8" y="262.3" width="5.0" height="6.1" stroke="#f5d9de" stroke-width="0.35"/>
<rect x="426.1" y="269.4" width="9.8" height="4.3" stroke="#f5d9de" stroke-width="0.35"/>
<rect x="436.9" y="269.4" width="9.7" height="4.3" stroke="#f5d9de" stroke-width="0.35"/>
<rect x="454.7" y="269.4" width="9.7" height="4.3" stroke="#f5d9de" stroke-width="0.35"/>
<path d="M454.7 271.6 H464.4" stroke="#f5d9de" stroke-width="0.35"/>
<rect x="410.0" y="274.8" width="4.6" height="8.7" stroke="#f5d9de" stroke-width="0.35"/>
<rect x="422.0" y="274.8" width="7.9" height="8.7" stroke="#f5d9de" stroke-width="0.35"/>
<path d="M422.0 279.1 H429.9" stroke="#f5d9de" stroke-width="0.35"/>
<rect x="453.4" y="274.8" width="9.0" height="8.7" stroke="#f5d9de" stroke-width="0.35"/>
<path d="M453.4 279.1 H462.5" stroke="#f5d9de" stroke-width="0.35"/>
<rect x="421.3" y="284.5" width="6.3" height="9.6" stroke="#f5d9de" stroke-width="0.35"/>
<rect x="459.7" y="284.5" width="5.3" height="9.6" stroke="#f5d9de" stroke-width="0.35"/>
<path d="M459.7 289.3 H465.0" stroke="#f5d9de" stroke-width="0.35"/>
<rect x="432.6" y="295.1" width="6.3" height="3.9" stroke="#f5d9de" stroke-width="0.35"/>
<path d="M435.8 295.1 V299.0" stroke="#f5d9de" stroke-width="0.35"/>
<rect x="449.6" y="295.1" width="11.1" height="3.9" stroke="#f5d9de" stroke-width="0.35"/>
<rect x="400.6" y="150.0" width="6.4" height="7.0" stroke="#cccccc" stroke-width="0.35"/>
<rect x="381.3" y="158.0" width="5.7" height="9.5" stroke="#cccccc" stroke-width="0.35"/>
<rect x="405.0" y="158.0" width="2.0" height="9.5" stroke="#cccccc" stroke-width="0.35"/>
<path d="M405.0 162.8 H407.0" stroke="#cccccc" stroke-width="0.35"/>
<rect x="373.2" y="168.5" width="8.7" height="9.2" stroke="#cccccc" stroke-width="0.35"/>
<path d="M377.5 168.5 V177.7" stroke="#cccccc" stroke-width="0.35"/>
<rect x="403.0" y="168.5" width="4.0" height="9.2" stroke="#cccccc" stroke-width="0.35"/>
<path d="M403.0 173.1 H407.0" stroke="#cccccc" stroke-width="0.35"/>
<rect x="369.8" y="178.7" width="10.3" height="5.6" stroke="#cccccc" stroke-width="0.35"/>
<path d="M375.0 178.7 V184.3" stroke="#cccccc" stroke-width="0.35"/>
<rect x="381.1" y="178.7" width="8.2" height="5.6" stroke="#cccccc" stroke-width="0.35"/>
<path d="M381.1 181.5 H389.3" stroke="#cccccc" stroke-width="0.35"/>
<rect x="402.2" y="178.7" width="4.8" height="5.6" stroke="#cccccc" stroke-width="0.35"/>
<rect x="388.1" y="185.3" width="6.0" height="6.0" stroke="#cccccc" stroke-width="0.35"/>
<path d="M391.1 185.3 V191.3" stroke="#cccccc" stroke-width="0.35"/>
<rect x="395.2" y="185.3" width="4.7" height="6.0" stroke="#cccccc" stroke-width="0.35"/>
<path d="M395.2 188.3 H399.8" stroke="#cccccc" stroke-width="0.35"/>
<rect x="369.5" y="192.3" width="7.2" height="9.4" stroke="#cccccc" stroke-width="0.35"/>
<rect x="370.3" y="202.7" width="11.9" height="6.1" stroke="#cccccc" stroke-width="0.35"/>
<path d="M376.2 202.7 V208.8" stroke="#cccccc" stroke-width="0.35"/>
<rect x="374.2" y="209.8" width="4.4" height="8.0" stroke="#cccccc" stroke-width="0.35"/>
<rect x="399.5" y="209.8" width="7.5" height="8.0" stroke="#cccccc" stroke-width="0.35"/>
<path d="M403.3 209.8 V217.8" stroke="#cccccc" stroke-width="0.35"/>
<rect x="364.0" y="218.8" width="7.9" height="3.9" stroke="#cccccc" stroke-width="0.35"/>
<path d="M367.9 218.8 V222.7" stroke="#cccccc" stroke-width="0.35"/>
<rect x="372.9" y="218.8" width="9.4" height="3.9" stroke="#cccccc" stroke-width="0.35"/>
<rect x="383.3" y="218.8" width="5.6" height="3.9" stroke="#cccccc" stroke-width="0.35"/>
<rect x="364.0" y="223.7" width="7.6" height="4.0" stroke="#cccccc" stroke-width="0.35"/>
<rect x="404.5" y="223.7" width="2.5" height="4.0" stroke="#cccccc" stroke-width="0.35"/>
<path d="M405.8 223.7 V227.6" stroke="#cccccc" stroke-width="0.35"/>
<rect x="364.0" y="228.6" width="8.4" height="8.0" stroke="#cccccc" stroke-width="0.35"/>
<rect x="380.6" y="228.6" width="5.2" height="8.0" stroke="#cccccc" stroke-width="0.35"/>
<rect x="386.8" y="228.6" width="6.7" height="8.0" stroke="#cccccc" stroke-width="0.35"/>
<path d="M390.1 228.6 V236.6" stroke="#cccccc" stroke-width="0.35"/>
<rect x="394.5" y="228.6" width="11.2" height="8.0" stroke="#cccccc" stroke-width="0.35"/>
<rect x="382.8" y="237.6" width="6.3" height="3.4" stroke="#cccccc" stroke-width="0.35"/>
<path d="M386.0 237.6 V241.0" stroke="#cccccc" stroke-width="0.35"/>
<rect x="403.1" y="237.6" width="3.9" height="3.4" stroke="#cccccc" stroke-width="0.35"/>
<path d="M403.1 239.3 H407.0" stroke="#cccccc" stroke-width="0.35"/>
<rect x="364.0" y="242.0" width="9.8" height="3.4" stroke="#cccccc" stroke-width="0.35"/>
<rect x="379.9" y="242.0" width="6.7" height="3.4" stroke="#cccccc" stroke-width="0.35"/>
<path d="M379.9 243.7 H386.7" stroke="#cccccc" stroke-width="0.35"/>
<rect x="387.7" y="242.0" width="8.2" height="3.4" stroke="#cccccc" stroke-width="0.35"/>
<path d="M387.7 243.7 H395.9" stroke="#cccccc" stroke-width="0.35"/>
<rect x="403.6" y="242.0" width="3.4" height="3.4" stroke="#cccccc" stroke-width="0.35"/>
<rect x="364.0" y="246.4" width="5.6" height="8.0" stroke="#cccccc" stroke-width="0.35"/>
<path d="M364.0 250.4 H369.6" stroke="#cccccc" stroke-width="0.35"/>
<rect x="370.6" y="246.4" width="8.0" height="8.0" stroke="#cccccc" stroke-width="0.35"/>
<path d="M370.6 250.4 H378.5" stroke="#cccccc" stroke-width="0.35"/>
<rect x="390.2" y="246.4" width="8.7" height="8.0" stroke="#cccccc" stroke-width="0.35"/>
<path d="M390.2 250.4 H398.9" stroke="#cccccc" stroke-width="0.35"/>
<rect x="387.2" y="255.4" width="7.9" height="3.4" stroke="#cccccc" stroke-width="0.35"/>
<rect x="405.0" y="255.4" width="2.0" height="3.4" stroke="#cccccc" stroke-width="0.35"/>
<rect x="370.3" y="259.8" width="8.8" height="5.6" stroke="#cccccc" stroke-width="0.35"/>
<path d="M374.7 259.8 V265.4" stroke="#cccccc" stroke-width="0.35"/>
<rect x="380.1" y="259.8" width="8.1" height="5.6" stroke="#cccccc" stroke-width="0.35"/>
<rect x="364.0" y="266.4" width="10.0" height="5.7" stroke="#cccccc" stroke-width="0.35"/>
<rect x="396.7" y="266.4" width="8.3" height="5.7" stroke="#cccccc" stroke-width="0.35"/>
<rect x="364.0" y="273.0" width="5.5" height="4.6" stroke="#cccccc" stroke-width="0.35"/>
<path d="M364.0 275.3 H369.5" stroke="#cccccc" stroke-width="0.35"/>
<rect x="370.5" y="273.0" width="4.2" height="4.6" stroke="#cccccc" stroke-width="0.35"/>
<rect x="375.7" y="273.0" width="5.6" height="4.6" stroke="#cccccc" stroke-width="0.35"/>
<path d="M375.7 275.3 H381.3" stroke="#cccccc" stroke-width="0.35"/>
<rect x="397.3" y="273.0" width="9.7" height="4.6" stroke="#cccccc" stroke-width="0.35"/>
<path d="M402.1 273.0 V277.6" stroke="#cccccc" stroke-width="0.35"/>
<rect x="364.0" y="278.6" width="6.2" height="6.5" stroke="#cccccc" stroke-width="0.35"/>
<path d="M367.1 278.6 V285.1" stroke="#cccccc" stroke-width="0.35"/>
<rect x="387.1" y="278.6" width="10.0" height="6.5" stroke="#cccccc" stroke-width="0.35"/>
<rect x="376.3" y="293.1" width="10.8" height="5.9" stroke="#cccccc" stroke-width="0.35"/>
<path d="M376.3 296.0 H387.1" stroke="#cccccc" stroke-width="0.35"/>
<rect x="388.1" y="293.1" width="11.5" height="5.9" stroke="#cccccc" stroke-width="0.35"/>
<path d="M388.1 296.0 H399.6" stroke="#cccccc" stroke-width="0.35"/>
<rect x="418.5" y="214.0" width="4.2" height="3.5" stroke="#cccccc" stroke-width="0.35"/>
<rect x="511.7" y="214.0" width="9.2" height="3.5" stroke="#cccccc" stroke-width="0.35"/>
<path d="M511.7 215.7 H520.9" stroke="#cccccc" stroke-width="0.35"/>
<rect x="417.1" y="218.5" width="8.3" height="6.6" stroke="#cccccc" stroke-width="0.35"/>
<path d="M421.3 218.5 V225.1" stroke="#cccccc" stroke-width="0.35"/>
<rect x="433.8" y="218.5" width="6.3" height="6.6" stroke="#cccccc" stroke-width="0.35"/>
<path d="M433.8 221.8 H440.1" stroke="#cccccc" stroke-width="0.35"/>
<rect x="487.6" y="218.5" width="6.5" height="6.6" stroke="#cccccc" stroke-width="0.35"/>
<path d="M487.6 221.8 H494.0" stroke="#cccccc" stroke-width="0.35"/>
<rect x="508.2" y="218.5" width="10.9" height="6.6" stroke="#cccccc" stroke-width="0.35"/>
<path d="M513.6 218.5 V225.1" stroke="#cccccc" stroke-width="0.35"/>
<rect x="410.0" y="226.1" width="11.9" height="5.0" stroke="#cccccc" stroke-width="0.35"/>
<rect x="422.9" y="226.1" width="5.3" height="5.0" stroke="#cccccc" stroke-width="0.35"/>
<rect x="429.2" y="226.1" width="7.5" height="5.0" stroke="#cccccc" stroke-width="0.35"/>
<path d="M432.9 226.1 V231.1" stroke="#cccccc" stroke-width="0.35"/>
<rect x="437.7" y="226.1" width="9.9" height="5.0" stroke="#cccccc" stroke-width="0.35"/>
<path d="M437.7 228.6 H447.6" stroke="#cccccc" stroke-width="0.35"/>
<rect x="448.6" y="226.1" width="9.9" height="5.0" stroke="#cccccc" stroke-width="0.35"/>
<path d="M453.5 226.1 V231.1" stroke="#cccccc" stroke-width="0.35"/>
<rect x="410.0" y="232.1" width="11.0" height="3.9" stroke="#cccccc" stroke-width="0.35"/>
<rect x="517.5" y="232.1" width="3.5" height="3.9" stroke="#cccccc" stroke-width="0.35"/>
<path d="M519.3 232.1 V236.0" stroke="#cccccc" stroke-width="0.35"/>
<rect x="410.0" y="237.0" width="8.7" height="7.0" stroke="#cccccc" stroke-width="0.35"/>
<rect x="445.6" y="237.0" width="11.3" height="7.0" stroke="#cccccc" stroke-width="0.35"/>
<path d="M445.6 240.5 H456.9" stroke="#cccccc" stroke-width="0.35"/>
<rect x="496.2" y="245.0" width="8.1" height="6.7" stroke="#cccccc" stroke-width="0.35"/>
<rect x="410.0" y="252.7" width="5.3" height="5.9" stroke="#cccccc" stroke-width="0.35"/>
<path d="M410.0 255.6 H415.3" stroke="#cccccc" stroke-width="0.35"/>
<rect x="416.3" y="252.7" width="5.5" height="5.9" stroke="#cccccc" stroke-width="0.35"/>
<rect x="462.2" y="252.7" width="9.5" height="5.9" stroke="#cccccc" stroke-width="0.35"/>
<path d="M462.2 255.6 H471.7" stroke="#cccccc" stroke-width="0.35"/>
<rect x="489.0" y="252.7" width="8.4" height="5.9" stroke="#cccccc" stroke-width="0.35"/>
<rect x="517.2" y="252.7" width="3.8" height="5.9" stroke="#cccccc" stroke-width="0.35"/>
<rect x="410.0" y="259.6" width="4.8" height="3.7" stroke="#cccccc" stroke-width="0.35"/>
<path d="M410.0 261.5 H414.8" stroke="#cccccc" stroke-width="0.35"/>
<rect x="425.7" y="259.6" width="4.5" height="3.7" stroke="#cccccc" stroke-width="0.35"/>
<rect x="438.8" y="259.6" width="6.8" height="3.7" stroke="#cccccc" stroke-width="0.35"/>
<path d="M442.2 259.6 V263.4" stroke="#cccccc" stroke-width="0.35"/>
<rect x="466.6" y="259.6" width="7.1" height="3.7" stroke="#cccccc" stroke-width="0.35"/>
<rect x="492.9" y="259.6" width="6.0" height="3.7" stroke="#cccccc" stroke-width="0.35"/>
<rect x="435.7" y="264.4" width="9.7" height="5.1" stroke="#cccccc" stroke-width="0.35"/>
<path d="M435.7 266.9 H445.5" stroke="#cccccc" stroke-width="0.35"/>
<rect x="455.4" y="264.4" width="5.9" height="5.1" stroke="#cccccc" stroke-width="0.35"/>
<path d="M458.3 264.4 V269.5" stroke="#cccccc" stroke-width="0.35"/>
<rect x="462.3" y="264.4" width="11.8" height="5.1" stroke="#cccccc" stroke-width="0.35"/>
<path d="M468.2 264.4 V269.5" stroke="#cccccc" stroke-width="0.35"/>
<rect x="484.3" y="264.4" width="7.2" height="5.1" stroke="#cccccc" stroke-width="0.35"/>
<path d="M484.3 266.9 H491.6" stroke="#cccccc" stroke-width="0.35"/>
<rect x="492.6" y="264.4" width="6.8" height="5.1" stroke="#cccccc" stroke-width="0.35"/>
<path d="M496.0 264.4 V269.5" stroke="#cccccc" stroke-width="0.35"/>
<rect x="500.4" y="264.4" width="5.9" height="5.1" stroke="#cccccc" stroke-width="0.35"/>
<rect x="507.3" y="264.4" width="6.7" height="5.1" stroke="#cccccc" stroke-width="0.35"/>
<rect x="515.0" y="264.4" width="4.7" height="5.1" stroke="#cccccc" stroke-width="0.35"/>
<rect x="418.5" y="270.5" width="10.4" height="3.9" stroke="#cccccc" stroke-width="0.35"/>
<path d="M418.5 272.4 H429.0" stroke="#cccccc" stroke-width="0.35"/>
<rect x="444.7" y="270.5" width="8.0" height="3.9" stroke="#cccccc" stroke-width="0.35"/>
<path d="M448.7 270.5 V274.4" stroke="#cccccc" stroke-width="0.35"/>
<rect x="453.7" y="270.5" width="9.7" height="3.9" stroke="#cccccc" stroke-width="0.35"/>
<rect x="493.7" y="270.5" width="8.3" height="3.9" stroke="#cccccc" stroke-width="0.35"/>
<rect x="410.0" y="275.4" width="4.7" height="5.7" stroke="#cccccc" stroke-width="0.35"/>
<rect x="437.0" y="275.4" width="6.4" height="5.7" stroke="#cccccc" stroke-width="0.35"/>
<path d="M440.2 275.4 V281.1" stroke="#cccccc" stroke-width="0.35"/>
<rect x="482.0" y="275.4" width="5.1" height="5.7" stroke="#cccccc" stroke-width="0.35"/>
<path d="M482.0 278.2 H487.1" stroke="#cccccc" stroke-width="0.35"/>
<rect x="506.7" y="275.4" width="9.6" height="5.7" stroke="#cccccc" stroke-width="0.35"/>
<rect x="426.8" y="282.1" width="4.3" height="4.3" stroke="#cccccc" stroke-width="0.35"/>
<path d="M429.0 282.1 V286.4" stroke="#cccccc" stroke-width="0.35"/>
<rect x="444.9" y="282.1" width="9.1" height="4.3" stroke="#cccccc" stroke-width="0.35"/>
<rect x="487.0" y="282.1" width="10.2" height="4.3" stroke="#cccccc" stroke-width="0.35"/>
<path d="M487.0 284.2 H497.3" stroke="#cccccc" stroke-width="0.35"/>
<rect x="498.3" y="282.1" width="8.9" height="4.3" stroke="#cccccc" stroke-width="0.35"/>
<path d="M502.7 282.1 V286.4" stroke="#cccccc" stroke-width="0.35"/>
<rect x="508.1" y="282.1" width="10.3" height="4.3" stroke="#cccccc" stroke-width="0.35"/>
<rect x="423.8" y="287.4" width="10.6" height="8.2" stroke="#cccccc" stroke-width="0.35"/>
<path d="M423.8 291.5 H434.5" stroke="#cccccc" stroke-width="0.35"/>
<rect x="466.0" y="287.4" width="7.6" height="8.2" stroke="#cccccc" stroke-width="0.35"/>
<rect x="483.1" y="287.4" width="11.4" height="8.2" stroke="#cccccc" stroke-width="0.35"/>
<rect x="500.9" y="287.4" width="10.4" height="8.2" stroke="#cccccc" stroke-width="0.35"/>
<path d="M500.9 291.5 H511.3" stroke="#cccccc" stroke-width="0.35"/>
<rect x="415.5" y="296.6" width="7.3" height="2.4" stroke="#cccccc" stroke-width="0.35"/>
<path d="M419.1 296.6 V299.0" stroke="#cccccc" stroke-width="0.35"/>
<rect x="434.4" y="296.6" width="5.9" height="2.4" stroke="#cccccc" stroke-width="0.35"/>
<path d="M437.4 296.6 V299.0" stroke="#cccccc" stroke-width="0.35"/>
<rect x="511.7" y="296.6" width="4.9" height="2.4" stroke="#cccccc" stroke-width="0.35"/>
<path d="M514.1 296.6 V299.0" stroke="#cccccc" stroke-width="0.35"/>
<rect x="517.6" y="296.6" width="3.4" height="2.4" stroke="#cccccc" stroke-width="0.35"/>
<path d="M517.6 297.8 H521.0" stroke="#cccccc" stroke-width="0.35"/>
<rect x="484.7" y="130.0" width="5.3" height="6.1" stroke="#cccccc" stroke-width="0.35"/>
<path d="M484.7 133.1 H490.0" stroke="#cccccc" stroke-width="0.35"/>
<rect x="491.0" y="130.0" width="10.0" height="6.1" stroke="#cccccc" stroke-width="0.35"/>
<rect x="504.2" y="137.1" width="6.0" height="6.0" stroke="#cccccc" stroke-width="0.35"/>
<path d="M507.2 137.1 V143.2" stroke="#cccccc" stroke-width="0.35"/>
<rect x="506.2" y="144.2" width="6.6" height="5.1" stroke="#cccccc" stroke-width="0.35"/>
<rect x="478.0" y="150.3" width="5.9" height="6.9" stroke="#cccccc" stroke-width="0.35"/>
<path d="M478.0 153.7 H483.9" stroke="#cccccc" stroke-width="0.35"/>
<rect x="489.3" y="158.1" width="11.8" height="4.1" stroke="#cccccc" stroke-width="0.35"/>
<path d="M495.2 158.1 V162.2" stroke="#cccccc" stroke-width="0.35"/>
<rect x="504.4" y="163.2" width="11.2" height="6.0" stroke="#cccccc" stroke-width="0.35"/>
<path d="M510.0 163.2 V169.2" stroke="#cccccc" stroke-width="0.35"/>
<rect x="476.5" y="180.0" width="7.6" height="3.2" stroke="#cccccc" stroke-width="0.35"/>
<rect x="510.9" y="180.0" width="4.9" height="3.2" stroke="#cccccc" stroke-width="0.35"/>
<rect x="516.8" y="180.0" width="2.2" height="3.2" stroke="#cccccc" stroke-width="0.35"/>
<rect x="482.8" y="184.2" width="8.4" height="4.8" stroke="#cccccc" stroke-width="0.35"/>
<path d="M487.0 184.2 V188.9" stroke="#cccccc" stroke-width="0.35"/>
<rect x="470.0" y="189.9" width="10.1" height="8.0" stroke="#cccccc" stroke-width="0.35"/>
<rect x="481.1" y="189.9" width="9.8" height="8.0" stroke="#cccccc" stroke-width="0.35"/>
<rect x="491.8" y="189.9" width="7.1" height="8.0" stroke="#cccccc" stroke-width="0.35"/>
<rect x="515.6" y="189.9" width="3.4" height="8.0" stroke="#cccccc" stroke-width="0.35"/>
<path d="M517.3 189.9 V197.9" stroke="#cccccc" stroke-width="0.35"/>
<rect x="492.1" y="207.1" width="10.6" height="4.2" stroke="#cccccc" stroke-width="0.35"/>
<path d="M492.1 209.2 H502.7" stroke="#cccccc" stroke-width="0.35"/>
<rect x="513.9" y="212.3" width="4.9" height="3.7" stroke="#cccccc" stroke-width="0.35"/>
<path d="M513.9 214.1 H518.9" stroke="#cccccc" stroke-width="0.35"/>
<rect x="479.0" y="222.3" width="10.4" height="4.1" stroke="#cccccc" stroke-width="0.35"/>
<path d="M479.0 224.3 H489.4" stroke="#cccccc" stroke-width="0.35"/>
<rect x="500.9" y="222.3" width="7.8" height="4.1" stroke="#cccccc" stroke-width="0.35"/>
<rect x="409.7" y="179.7" width="55" height="32" stroke="#cccccc" stroke-width="0.4"/>
<path d="M416 185 H459" stroke="#cccccc" stroke-width="0.35"/>
<path d="M416 190 H459" stroke="#cccccc" stroke-width="0.35"/>
<path d="M416 195 H459" stroke="#cccccc" stroke-width="0.35"/>
<path d="M416 200 H459" stroke="#cccccc" stroke-width="0.35"/>
<path d="M416 205 H459" stroke="#cccccc" stroke-width="0.35"/>
<circle cx="413" cy="181" r="0.9" stroke="#c8c8c8" stroke-width="0.3"/><circle cx="461.5" cy="181" r="0.9" stroke="#c8c8c8" stroke-width="0.3"/>
<circle cx="413" cy="184" r="0.9" stroke="#c8c8c8" stroke-width="0.3"/><circle cx="461.5" cy="184" r="0.9" stroke="#c8c8c8" stroke-width="0.3"/>
<circle cx="413" cy="187" r="0.9" stroke="#c8c8c8" stroke-width="0.3"/><circle cx="461.5" cy="187" r="0.9" stroke="#c8c8c8" stroke-width="0.3"/>
<circle cx="413" cy="190" r="0.9" stroke="#c8c8c8" stroke-width="0.3"/><circle cx="461.5" cy="190" r="0.9" stroke="#c8c8c8" stroke-width="0.3"/>
<circle cx="413" cy="193" r="0.9" stroke="#c8c8c8" stroke-width="0.3"/><circle cx="461.5" cy="193" r="0.9" stroke="#c8c8c8" stroke-width="0.3"/>
<circle cx="413" cy="196" r="0.9" stroke="#c8c8c8" stroke-width="0.3"/><circle cx="461.5" cy="196" r="0.9" stroke="#c8c8c8" stroke-width="0.3"/>
<circle cx="413" cy="199" r="0.9" stroke="#c8c8c8" stroke-width="0.3"/><circle cx="461.5" cy="199" r="0.9" stroke="#c8c8c8" stroke-width="0.3"/>
<circle cx="413" cy="202" r="0.9" stroke="#c8c8c8" stroke-width="0.3"/><circle cx="461.5" cy="202" r="0.9" stroke="#c8c8c8" stroke-width="0.3"/>
<circle cx="413" cy="205" r="0.9" stroke="#c8c8c8" stroke-width="0.3"/><circle cx="461.5" cy="205" r="0.9" stroke="#c8c8c8" stroke-width="0.3"/>
<circle cx="413" cy="208" r="0.9" stroke="#c8c8c8" stroke-width="0.3"/><circle cx="461.5" cy="208" r="0.9" stroke="#c8c8c8" stroke-width="0.3"/>
<rect x="394" y="168" width="3.6" height="7.4" stroke="#cccccc" stroke-width="0.4"/>
<rect x="399" y="168" width="3.6" height="7.4" stroke="#cccccc" stroke-width="0.4"/>
<rect x="404" y="168" width="3.6" height="7.4" stroke="#cccccc" stroke-width="0.4"/>
<rect x="409" y="168" width="3.6" height="7.4" stroke="#cccccc" stroke-width="0.4"/>
<rect x="414" y="168" width="3.6" height="7.4" stroke="#cccccc" stroke-width="0.4"/>
<rect x="419" y="168" width="3.6" height="7.4" stroke="#cccccc" stroke-width="0.4"/>
<rect x="424" y="168" width="3.6" height="7.4" stroke="#cccccc" stroke-width="0.4"/>
<rect x="429" y="168" width="3.6" height="7.4" stroke="#cccccc" stroke-width="0.4"/>
<rect x="434" y="168" width="3.6" height="7.4" stroke="#cccccc" stroke-width="0.4"/>
<rect x="439" y="168" width="3.6" height="7.4" stroke="#aed67c" stroke-width="0.4"/>
<rect x="444" y="168" width="3.6" height="7.4" stroke="#aed67c" stroke-width="0.4"/>
<rect x="449" y="168" width="3.6" height="7.4" stroke="#aed67c" stroke-width="0.4"/>
<rect x="454" y="168" width="3.6" height="7.4" stroke="#aed67c" stroke-width="0.4"/>
<circle cx="446.5" cy="141.3" r="1.3" stroke="#aed67c" stroke-width="0.4"/>
<circle cx="450.2" cy="141.3" r="1.3" stroke="#aed67c" stroke-width="0.4"/>
<circle cx="453.9" cy="141.3" r="1.3" stroke="#aed67c" stroke-width="0.4"/>
<circle cx="457.6" cy="141.3" r="1.3" stroke="#aed67c" stroke-width="0.4"/>
<circle cx="461.3" cy="141.3" r="1.3" stroke="#aed67c" stroke-width="0.4"/>
<circle cx="465" cy="141.3" r="1.3" stroke="#aed67c" stroke-width="0.4"/>
<circle cx="398" cy="165" r="1" stroke="#aed67c" stroke-width="0.35"/><circle cx="398" cy="180" r="1" stroke="#aed67c" stroke-width="0.35"/>
<circle cx="401" cy="165" r="1" stroke="#aed67c" stroke-width="0.35"/><circle cx="401" cy="180" r="1" stroke="#aed67c" stroke-width="0.35"/>
<circle cx="404" cy="165" r="1" stroke="#aed67c" stroke-width="0.35"/><circle cx="404" cy="180" r="1" stroke="#aed67c" stroke-width="0.35"/>
<rect x="480.59999999999997" y="134.2" width="3.2" height="3.2" rx="1" stroke="#aed67c" stroke-width="0.5"/><rect x="480.59999999999997" y="137.79999999999998" width="3.2" height="3.2" rx="1" stroke="#aed67c" stroke-width="0.5"/>
<rect x="500.09999999999997" y="143.5" width="3.2" height="3.2" rx="1" stroke="#aed67c" stroke-width="0.5"/><rect x="500.09999999999997" y="147.1" width="3.2" height="3.2" rx="1" stroke="#aed67c" stroke-width="0.5"/>
<rect x="482.09999999999997" y="164.6" width="3.2" height="3.2" rx="1" stroke="#aed67c" stroke-width="0.5"/><rect x="482.09999999999997" y="168.2" width="3.2" height="3.2" rx="1" stroke="#aed67c" stroke-width="0.5"/>
<rect x="481.4" y="200.6" width="3.2" height="3.2" rx="1" stroke="#aed67c" stroke-width="0.5"/><rect x="481.4" y="204.2" width="3.2" height="3.2" rx="1" stroke="#aed67c" stroke-width="0.5"/>
<rect x="504.7" y="205.29999999999998" width="3.2" height="3.2" rx="1" stroke="#aed67c" stroke-width="0.5"/><rect x="504.7" y="208.89999999999998" width="3.2" height="3.2" rx="1" stroke="#aed67c" stroke-width="0.5"/>
<rect x="481.4" y="224.6" width="3.2" height="3.2" rx="1" stroke="#aed67c" stroke-width="0.5"/><rect x="481.4" y="228.2" width="3.2" height="3.2" rx="1" stroke="#aed67c" stroke-width="0.5"/>
<rect x="480.4" y="226.6" width="3.2" height="3.2" rx="1" stroke="#aed67c" stroke-width="0.5"/><rect x="480.4" y="230.2" width="3.2" height="3.2" rx="1" stroke="#aed67c" stroke-width="0.5"/>
<rect x="485.0" y="287.90000000000003" width="3.2" height="3.2" rx="1" stroke="#aed67c" stroke-width="0.5"/><rect x="485.0" y="291.5" width="3.2" height="3.2" rx="1" stroke="#aed67c" stroke-width="0.5"/>
<circle cx="369" cy="139" r="1.7" stroke="#cfe48a" stroke-width="0.6"/>
<circle cx="372" cy="136" r="1.7" stroke="#cfe48a" stroke-width="0.6"/>
<circle cx="376" cy="133" r="1.7" stroke="#cfe48a" stroke-width="0.6"/>
<circle cx="383.5" cy="131.8" r="1.7" stroke="#cfe48a" stroke-width="0.6"/>
<circle cx="427" cy="146.3" r="1.7" stroke="#cfe48a" stroke-width="0.6"/>
<circle cx="365" cy="146" r="1.7" stroke="#cfe48a" stroke-width="0.6"/>
<circle cx="374" cy="157" r="1.7" stroke="#cfe48a" stroke-width="0.6"/>
<rect x="415.5" y="250.6" width="14.5" height="16" stroke="#aed67c" stroke-width="0.45"/><path d="M417.5 252.6 L428.0 264.6 M428.0 252.6 L417.5 264.6" stroke="#c4e096" stroke-width="0.4"/>
<rect x="446" y="250.6" width="14.5" height="16" stroke="#aed67c" stroke-width="0.45"/><path d="M448 252.6 L458.5 264.6 M458.5 252.6 L448 264.6" stroke="#c4e096" stroke-width="0.4"/>
<rect x="457.6" y="276.8" width="13" height="18.8" stroke="#aed67c" stroke-width="0.45"/><path d="M459.6 278.8 L468.6 293.6 M468.6 278.8 L459.6 293.6" stroke="#c4e096" stroke-width="0.4"/>
<rect x="431" y="251.6" width="14" height="14" stroke="#cccccc" stroke-width="0.4"/>
<rect x="433" y="217" width="10" height="9" rx="1" stroke="#aed67c" stroke-width="0.55"/>
<rect x="456" y="233" width="5" height="5" rx="1" stroke="#aed67c" stroke-width="0.55"/>
<rect x="431.4" y="292.7" width="16" height="5" rx="1" stroke="#aed67c" stroke-width="0.55"/>
<rect x="377" y="294" width="13.8" height="6" rx="1" stroke="#aed67c" stroke-width="0.55"/>
<rect x="401" y="245" width="5" height="5" rx="1" stroke="#aed67c" stroke-width="0.55"/>
<rect x="403" y="258" width="5" height="5" rx="1" stroke="#aed67c" stroke-width="0.55"/>
<circle cx="383.5" cy="285.5" r="1.5" stroke="#aed67c" stroke-width="0.5"/>
<circle cx="387" cy="285.5" r="1.5" stroke="#aed67c" stroke-width="0.5"/>
<rect x="502.5" y="234.7" width="14.5" height="7.3" stroke="#cccccc" stroke-width="0.45"/>
<rect x="502.5" y="247.7" width="14.5" height="24.7" stroke="#cccccc" stroke-width="0.45"/>
<rect x="524.4" y="131.6" width="2.8" height="2.4" rx="0.5" stroke="#b4d888" stroke-width="0.5"/>
<rect x="524.4" y="134.7" width="2.8" height="2.4" rx="0.5" stroke="#b4d888" stroke-width="0.5"/>
<rect x="524.4" y="137.7" width="2.8" height="2.4" rx="0.5" stroke="#b4d888" stroke-width="0.5"/>
<rect x="524.4" y="140.8" width="2.8" height="2.4" rx="0.5" stroke="#b4d888" stroke-width="0.5"/>
<rect x="524.4" y="143.8" width="2.8" height="2.4" rx="0.5" stroke="#b4d888" stroke-width="0.5"/>
<rect x="524.4" y="146.8" width="2.8" height="2.4" rx="0.5" stroke="#b4d888" stroke-width="0.5"/>
<rect x="524.4" y="149.9" width="2.8" height="2.4" rx="0.5" stroke="#b4d888" stroke-width="0.5"/>
<rect x="524.4" y="152.9" width="2.8" height="2.4" rx="0.5" stroke="#b4d888" stroke-width="0.5"/>
<rect x="524.4" y="156.0" width="2.8" height="2.4" rx="0.5" stroke="#b4d888" stroke-width="0.5"/>
<rect x="524.4" y="159.0" width="2.8" height="2.4" rx="0.5" stroke="#b4d888" stroke-width="0.5"/>
<rect x="524.4" y="162.1" width="2.8" height="2.4" rx="0.5" stroke="#b4d888" stroke-width="0.5"/>
<rect x="524.4" y="165.1" width="2.8" height="2.4" rx="0.5" stroke="#b4d888" stroke-width="0.5"/>
<rect x="524.4" y="168.2" width="2.8" height="2.4" rx="0.5" stroke="#b4d888" stroke-width="0.5"/>
<rect x="524.4" y="171.2" width="2.8" height="2.4" rx="0.5" stroke="#b4d888" stroke-width="0.5"/>
<rect x="524.4" y="174.3" width="2.8" height="2.4" rx="0.5" stroke="#b4d888" stroke-width="0.5"/>
<rect x="524.4" y="177.3" width="2.8" height="2.4" rx="0.5" stroke="#b4d888" stroke-width="0.5"/>
<rect x="524.4" y="180.4" width="2.8" height="2.4" rx="0.5" stroke="#b4d888" stroke-width="0.5"/>
<rect x="524.4" y="189.5" width="2.8" height="2.4" rx="0.5" stroke="#b4d888" stroke-width="0.5"/>
<rect x="524.4" y="192.6" width="2.8" height="2.4" rx="0.5" stroke="#b4d888" stroke-width="0.5"/>
<rect x="524.4" y="195.6" width="2.8" height="2.4" rx="0.5" stroke="#b4d888" stroke-width="0.5"/>
<rect x="524.4" y="198.7" width="2.8" height="2.4" rx="0.5" stroke="#b4d888" stroke-width="0.5"/>
<rect x="524.4" y="201.8" width="2.8" height="2.4" rx="0.5" stroke="#b4d888" stroke-width="0.5"/>
<rect x="524.4" y="204.8" width="2.8" height="2.4" rx="0.5" stroke="#b4d888" stroke-width="0.5"/>
<rect x="524.4" y="207.8" width="2.8" height="2.4" rx="0.5" stroke="#b4d888" stroke-width="0.5"/>
<rect x="524.4" y="210.9" width="2.8" height="2.4" rx="0.5" stroke="#b4d888" stroke-width="0.5"/>
<rect x="524.4" y="213.9" width="2.8" height="2.4" rx="0.5" stroke="#b4d888" stroke-width="0.5"/>
<rect x="524.4" y="217.0" width="2.8" height="2.4" rx="0.5" stroke="#b4d888" stroke-width="0.5"/>
<rect x="524.4" y="220.0" width="2.8" height="2.4" rx="0.5" stroke="#b4d888" stroke-width="0.5"/>
<rect x="524.4" y="223.1" width="2.8" height="2.4" rx="0.5" stroke="#b4d888" stroke-width="0.5"/>
<rect x="524.4" y="226.1" width="2.8" height="2.4" rx="0.5" stroke="#b4d888" stroke-width="0.5"/>
<rect x="524.4" y="229.2" width="2.8" height="2.4" rx="0.5" stroke="#b4d888" stroke-width="0.5"/>
<rect x="524.4" y="232.2" width="2.8" height="2.4" rx="0.5" stroke="#b4d888" stroke-width="0.5"/>
<rect x="524.4" y="235.3" width="2.8" height="2.4" rx="0.5" stroke="#b4d888" stroke-width="0.5"/>
<rect x="524.4" y="238.3" width="2.8" height="2.4" rx="0.5" stroke="#b4d888" stroke-width="0.5"/>
<rect x="524.4" y="241.4" width="2.8" height="2.4" rx="0.5" stroke="#b4d888" stroke-width="0.5"/>
<rect x="524.4" y="244.4" width="2.8" height="2.4" rx="0.5" stroke="#b4d888" stroke-width="0.5"/>
<rect x="524.4" y="247.5" width="2.8" height="2.4" rx="0.5" stroke="#b4d888" stroke-width="0.5"/>
<rect x="524.4" y="250.5" width="2.8" height="2.4" rx="0.5" stroke="#b4d888" stroke-width="0.5"/>
<rect x="524.4" y="253.6" width="2.8" height="2.4" rx="0.5" stroke="#b4d888" stroke-width="0.5"/>
<rect x="524.4" y="256.6" width="2.8" height="2.4" rx="0.5" stroke="#b4d888" stroke-width="0.5"/>
<rect x="524.4" y="259.7" width="2.8" height="2.4" rx="0.5" stroke="#b4d888" stroke-width="0.5"/>
<rect x="524.4" y="262.8" width="2.8" height="2.4" rx="0.5" stroke="#b4d888" stroke-width="0.5"/>
<rect x="524.4" y="265.8" width="2.8" height="2.4" rx="0.5" stroke="#b4d888" stroke-width="0.5"/>
<rect x="524.4" y="274.9" width="2.8" height="2.4" rx="0.5" stroke="#b4d888" stroke-width="0.5"/>
<rect x="524.4" y="278.0" width="2.8" height="2.4" rx="0.5" stroke="#b4d888" stroke-width="0.5"/>
<rect x="524.4" y="281.0" width="2.8" height="2.4" rx="0.5" stroke="#b4d888" stroke-width="0.5"/>
<rect x="524.4" y="284.1" width="2.8" height="2.4" rx="0.5" stroke="#b4d888" stroke-width="0.5"/>
<rect x="524.4" y="287.1" width="2.8" height="2.4" rx="0.5" stroke="#b4d888" stroke-width="0.5"/>
<rect x="524.4" y="290.2" width="2.8" height="2.4" rx="0.5" stroke="#b4d888" stroke-width="0.5"/>
<rect x="524.4" y="293.2" width="2.8" height="2.4" rx="0.5" stroke="#b4d888" stroke-width="0.5"/>
<rect x="524.4" y="296.3" width="2.8" height="2.4" rx="0.5" stroke="#b4d888" stroke-width="0.5"/>
<rect x="524.4" y="299.4" width="2.8" height="2.4" rx="0.5" stroke="#b4d888" stroke-width="0.5"/>
<rect x="524.4" y="302.4" width="2.8" height="2.4" rx="0.5" stroke="#b4d888" stroke-width="0.5"/>
<rect x="524.4" y="305.4" width="2.8" height="2.4" rx="0.5" stroke="#b4d888" stroke-width="0.5"/>
<rect x="524.4" y="308.5" width="2.8" height="2.4" rx="0.5" stroke="#b4d888" stroke-width="0.5"/>
<rect x="524.4" y="311.5" width="2.8" height="2.4" rx="0.5" stroke="#b4d888" stroke-width="0.5"/>
<rect x="524.4" y="314.6" width="2.8" height="2.4" rx="0.5" stroke="#b4d888" stroke-width="0.5"/>
<rect x="524.4" y="317.6" width="2.8" height="2.4" rx="0.5" stroke="#b4d888" stroke-width="0.5"/>
<rect x="534.4" y="137" width="6.6" height="43" stroke="#d0d0d0" stroke-width="0.35"/>
<path d="M534.4 137.0 H541" stroke="#d6d6d6" stroke-width="0.3"/>
<path d="M534.4 138.7 H541" stroke="#d6d6d6" stroke-width="0.3"/>
<path d="M534.4 140.4 H541" stroke="#d6d6d6" stroke-width="0.3"/>
<path d="M534.4 142.1 H541" stroke="#d6d6d6" stroke-width="0.3"/>
<path d="M534.4 143.8 H541" stroke="#d6d6d6" stroke-width="0.3"/>
<path d="M534.4 145.5 H541" stroke="#d6d6d6" stroke-width="0.3"/>
<path d="M534.4 147.2 H541" stroke="#d6d6d6" stroke-width="0.3"/>
<path d="M534.4 148.9 H541" stroke="#d6d6d6" stroke-width="0.3"/>
<path d="M534.4 150.6 H541" stroke="#d6d6d6" stroke-width="0.3"/>
<path d="M534.4 152.3 H541" stroke="#d6d6d6" stroke-width="0.3"/>
<path d="M534.4 154.0 H541" stroke="#d6d6d6" stroke-width="0.3"/>
<path d="M534.4 155.7 H541" stroke="#d6d6d6" stroke-width="0.3"/>
<path d="M534.4 157.4 H541" stroke="#d6d6d6" stroke-width="0.3"/>
<path d="M534.4 159.1 H541" stroke="#d6d6d6" stroke-width="0.3"/>
<path d="M534.4 160.8 H541" stroke="#d6d6d6" stroke-width="0.3"/>
<path d="M534.4 162.5 H541" stroke="#d6d6d6" stroke-width="0.3"/>
<path d="M534.4 164.2 H541" stroke="#d6d6d6" stroke-width="0.3"/>
<path d="M534.4 165.9 H541" stroke="#d6d6d6" stroke-width="0.3"/>
<path d="M534.4 167.6 H541" stroke="#d6d6d6" stroke-width="0.3"/>
<path d="M534.4 169.3 H541" stroke="#d6d6d6" stroke-width="0.3"/>
<path d="M534.4 171.0 H541" stroke="#d6d6d6" stroke-width="0.3"/>
<path d="M534.4 172.7 H541" stroke="#d6d6d6" stroke-width="0.3"/>
<path d="M534.4 174.4 H541" stroke="#d6d6d6" stroke-width="0.3"/>
<path d="M534.4 176.1 H541" stroke="#d6d6d6" stroke-width="0.3"/>
<path d="M534.4 177.8 H541" stroke="#d6d6d6" stroke-width="0.3"/>
<path d="M534.4 179.5 H541" stroke="#d6d6d6" stroke-width="0.3"/>
<rect x="534.4" y="188" width="6.6" height="38" stroke="#d0d0d0" stroke-width="0.35"/>
<path d="M534.4 188.0 H541" stroke="#d6d6d6" stroke-width="0.3"/>
<path d="M534.4 189.7 H541" stroke="#d6d6d6" stroke-width="0.3"/>
<path d="M534.4 191.4 H541" stroke="#d6d6d6" stroke-width="0.3"/>
<path d="M534.4 193.1 H541" stroke="#d6d6d6" stroke-width="0.3"/>
<path d="M534.4 194.8 H541" stroke="#d6d6d6" stroke-width="0.3"/>
<path d="M534.4 196.5 H541" stroke="#d6d6d6" stroke-width="0.3"/>
<path d="M534.4 198.2 H541" stroke="#d6d6d6" stroke-width="0.3"/>
<path d="M534.4 199.9 H541" stroke="#d6d6d6" stroke-width="0.3"/>
<path d="M534.4 201.6 H541" stroke="#d6d6d6" stroke-width="0.3"/>
<path d="M534.4 203.3 H541" stroke="#d6d6d6" stroke-width="0.3"/>
<path d="M534.4 205.0 H541" stroke="#d6d6d6" stroke-width="0.3"/>
<path d="M534.4 206.7 H541" stroke="#d6d6d6" stroke-width="0.3"/>
<path d="M534.4 208.4 H541" stroke="#d6d6d6" stroke-width="0.3"/>
<path d="M534.4 210.1 H541" stroke="#d6d6d6" stroke-width="0.3"/>
<path d="M534.4 211.8 H541" stroke="#d6d6d6" stroke-width="0.3"/>
<path d="M534.4 213.5 H541" stroke="#d6d6d6" stroke-width="0.3"/>
<path d="M534.4 215.2 H541" stroke="#d6d6d6" stroke-width="0.3"/>
<path d="M534.4 216.9 H541" stroke="#d6d6d6" stroke-width="0.3"/>
<path d="M534.4 218.6 H541" stroke="#d6d6d6" stroke-width="0.3"/>
<path d="M534.4 220.3 H541" stroke="#d6d6d6" stroke-width="0.3"/>
<path d="M534.4 222.0 H541" stroke="#d6d6d6" stroke-width="0.3"/>
<path d="M534.4 223.7 H541" stroke="#d6d6d6" stroke-width="0.3"/>
<path d="M534.4 225.4 H541" stroke="#d6d6d6" stroke-width="0.3"/>
<rect x="534.4" y="230" width="6.6" height="60" stroke="#d0d0d0" stroke-width="0.35"/>
<path d="M534.4 230.0 H541" stroke="#d6d6d6" stroke-width="0.3"/>
<path d="M534.4 231.7 H541" stroke="#d6d6d6" stroke-width="0.3"/>
<path d="M534.4 233.4 H541" stroke="#d6d6d6" stroke-width="0.3"/>
<path d="M534.4 235.1 H541" stroke="#d6d6d6" stroke-width="0.3"/>
<path d="M534.4 236.8 H541" stroke="#d6d6d6" stroke-width="0.3"/>
<path d="M534.4 238.5 H541" stroke="#d6d6d6" stroke-width="0.3"/>
<path d="M534.4 240.2 H541" stroke="#d6d6d6" stroke-width="0.3"/>
<path d="M534.4 241.9 H541" stroke="#d6d6d6" stroke-width="0.3"/>
<path d="M534.4 243.6 H541" stroke="#d6d6d6" stroke-width="0.3"/>
<path d="M534.4 245.3 H541" stroke="#d6d6d6" stroke-width="0.3"/>
<path d="M534.4 247.0 H541" stroke="#d6d6d6" stroke-width="0.3"/>
<path d="M534.4 248.7 H541" stroke="#d6d6d6" stroke-width="0.3"/>
<path d="M534.4 250.4 H541" stroke="#d6d6d6" stroke-width="0.3"/>
<path d="M534.4 252.1 H541" stroke="#d6d6d6" stroke-width="0.3"/>
<path d="M534.4 253.8 H541" stroke="#d6d6d6" stroke-width="0.3"/>
<path d="M534.4 255.5 H541" stroke="#d6d6d6" stroke-width="0.3"/>
<path d="M534.4 257.2 H541" stroke="#d6d6d6" stroke-width="0.3"/>
<path d="M534.4 258.9 H541" stroke="#d6d6d6" stroke-width="0.3"/>
<path d="M534.4 260.6 H541" stroke="#d6d6d6" stroke-width="0.3"/>
<path d="M534.4 262.3 H541" stroke="#d6d6d6" stroke-width="0.3"/>
<path d="M534.4 264.0 H541" stroke="#d6d6d6" stroke-width="0.3"/>
<path d="M534.4 265.7 H541" stroke="#d6d6d6" stroke-width="0.3"/>
<path d="M534.4 267.4 H541" stroke="#d6d6d6" stroke-width="0.3"/>
<path d="M534.4 269.1 H541" stroke="#d6d6d6" stroke-width="0.3"/>
<path d="M534.4 270.8 H541" stroke="#d6d6d6" stroke-width="0.3"/>
<path d="M534.4 272.5 H541" stroke="#d6d6d6" stroke-width="0.3"/>
<path d="M534.4 274.2 H541" stroke="#d6d6d6" stroke-width="0.3"/>
<path d="M534.4 275.9 H541" stroke="#d6d6d6" stroke-width="0.3"/>
<path d="M534.4 277.6 H541" stroke="#d6d6d6" stroke-width="0.3"/>
<path d="M534.4 279.3 H541" stroke="#d6d6d6" stroke-width="0.3"/>
<path d="M534.4 281.0 H541" stroke="#d6d6d6" stroke-width="0.3"/>
<path d="M534.4 282.7 H541" stroke="#d6d6d6" stroke-width="0.3"/>
<path d="M534.4 284.4 H541" stroke="#d6d6d6" stroke-width="0.3"/>
<path d="M534.4 286.1 H541" stroke="#d6d6d6" stroke-width="0.3"/>
<path d="M534.4 287.8 H541" stroke="#d6d6d6" stroke-width="0.3"/>
<path d="M534.4 289.5 H541" stroke="#d6d6d6" stroke-width="0.3"/>
<path d="M542.6 132 L542.6 300" stroke="#cdd2f2" stroke-width="0.4" stroke-dasharray="1.2 0.8"/>
</svg>
<div class="abs" id="hruler"></div>
<div class="abs" id="vruler"></div>
<svg class="abs" style="left:0;top:0" width="760" height="427" viewBox="0 0 760 427">
<path d="M25.6 36.6 V43.4" stroke="#6c6c6c" stroke-width="0.4"/>
<text x="26.5" y="41" font-size="3.3" fill="#9c9c9c" font-family="Liberation Sans,sans-serif">10</text>
<path d="M31.4 41.6 V43.4" stroke="#636363" stroke-width="0.35"/>
<path d="M37.3 40.6 V43.4" stroke="#636363" stroke-width="0.35"/>
<path d="M43.1 41.6 V43.4" stroke="#636363" stroke-width="0.35"/>
<path d="M49.0 36.6 V43.4" stroke="#6c6c6c" stroke-width="0.4"/>
<text x="49.9" y="41" font-size="3.3" fill="#9c9c9c" font-family="Liberation Sans,sans-serif">8</text>
<path d="M54.8 41.6 V43.4" stroke="#636363" stroke-width="0.35"/>
<path d="M60.7 40.6 V43.4" stroke="#636363" stroke-width="0.35"/>
<path d="M66.5 41.6 V43.4" stroke="#636363" stroke-width="0.35"/>
<path d="M72.4 36.6 V43.4" stroke="#6c6c6c" stroke-width="0.4"/>
<text x="73.3" y="41" font-size="3.3" fill="#9c9c9c" font-family="Liberation Sans,sans-serif">6</text>
<path d="M78.2 41.6 V43.4" stroke="#636363" stroke-width="0.35"/>
<path d="M84.1 40.6 V43.4" stroke="#636363" stroke-width="0.35"/>
<path d="M89.9 41.6 V43.4" stroke="#636363" stroke-width="0.35"/>
<path d="M95.8 36.6 V43.4" stroke="#6c6c6c" stroke-width="0.4"/>
<text x="96.7" y="41" font-size="3.3" fill="#9c9c9c" font-family="Liberation Sans,sans-serif">4</text>
<path d="M101.6 41.6 V43.4" stroke="#636363" stroke-width="0.35"/>
<path d="M107.5 40.6 V43.4" stroke="#636363" stroke-width="0.35"/>
<path d="M113.3 41.6 V43.4" stroke="#636363" stroke-width="0.35"/>
<path d="M119.2 36.6 V43.4" stroke="#6c6c6c" stroke-width="0.4"/>
<text x="120.1" y="41" font-size="3.3" fill="#9c9c9c" font-family="Liberation Sans,sans-serif">2</text>
<path d="M125.0 41.6 V43.4" stroke="#636363" stroke-width="0.35"/>
<path d="M130.9 40.6 V43.4" stroke="#636363" stroke-width="0.35"/>
<path d="M136.8 41.6 V43.4" stroke="#636363" stroke-width="0.35"/>
<path d="M142.6 36.6 V43.4" stroke="#6c6c6c" stroke-width="0.4"/>
<text x="143.5" y="41" font-size="3.3" fill="#9c9c9c" font-family="Liberation Sans,sans-serif">0</text>
<path d="M148.4 41.6 V43.4" stroke="#636363" stroke-width="0.35"/>
<path d="M154.3 40.6 V43.4" stroke="#636363" stroke-width="0.35"/>
<path d="M160.1 41.6 V43.4" stroke="#636363" stroke-width="0.35"/>
<path d="M166.0 36.6 V43.4" stroke="#6c6c6c" stroke-width="0.4"/>
<text x="166.9" y="41" font-size="3.3" fill="#9c9c9c" font-family="Liberation Sans,sans-serif">2</text>
<path d="M171.8 41.6 V43.4" stroke="#636363" stroke-width="0.35"/>
<path d="M177.7 40.6 V43.4" stroke="#636363" stroke-width="0.35"/>
<path d="M183.6 41.6 V43.4" stroke="#636363" stroke-width="0.35"/>
<path d="M189.4 36.6 V43.4" stroke="#6c6c6c" stroke-width="0.4"/>
<text x="190.3" y="41" font-size="3.3" fill="#9c9c9c" font-family="Liberation Sans,sans-serif">4</text>
<path d="M195.2 41.6 V43.4" stroke="#636363" stroke-width="0.35"/>
<path d="M201.1 40.6 V43.4" stroke="#636363" stroke-width="0.35"/>
<path d="M206.9 41.6 V43.4" stroke="#636363" stroke-width="0.35"/>
<path d="M212.8 36.6 V43.4" stroke="#6c6c6c" stroke-width="0.4"/>
<text x="213.7" y="41" font-size="3.3" fill="#9c9c9c" font-family="Liberation Sans,sans-serif">6</text>
<path d="M218.7 41.6 V43.4" stroke="#636363" stroke-width="0.35"/>
<path d="M224.5 40.6 V43.4" stroke="#636363" stroke-width="0.35"/>
<path d="M230.4 41.6 V43.4" stroke="#636363" stroke-width="0.35"/>
<path d="M236.2 36.6 V43.4" stroke="#6c6c6c" stroke-width="0.4"/>
<text x="237.1" y="41" font-size="3.3" fill="#9c9c9c" font-family="Liberation Sans,sans-serif">8</text>
<path d="M242.1 41.6 V43.4" stroke="#636363" stroke-width="0.35"/>
<path d="M247.9 40.6 V43.4" stroke="#636363" stroke-width="0.35"/>
<path d="M253.8 41.6 V43.4" stroke="#636363" stroke-width="0.35"/>
<path d="M259.6 36.6 V43.4" stroke="#6c6c6c" stroke-width="0.4"/>
<text x="260.5" y="41" font-size="3.3" fill="#9c9c9c" font-family="Liberation Sans,sans-serif">10</text>
<path d="M265.5 41.6 V43.4" stroke="#636363" stroke-width="0.35"/>
<path d="M271.3 40.6 V43.4" stroke="#636363" stroke-width="0.35"/>
<path d="M277.2 41.6 V43.4" stroke="#636363" stroke-width="0.35"/>
<path d="M283.0 36.6 V43.4" stroke="#6c6c6c" stroke-width="0.4"/>
<text x="283.9" y="41" font-size="3.3" fill="#9c9c9c" font-family="Liberation Sans,sans-serif">12</text>
<path d="M288.9 41.6 V43.4" stroke="#636363" stroke-width="0.35"/>
<path d="M294.7 40.6 V43.4" stroke="#636363" stroke-width="0.35"/>
<path d="M300.6 41.6 V43.4" stroke="#636363" stroke-width="0.35"/>
<path d="M306.4 36.6 V43.4" stroke="#6c6c6c" stroke-width="0.4"/>
<text x="307.3" y="41" font-size="3.3" fill="#9c9c9c" font-family="Liberation Sans,sans-serif">14</text>
<path d="M312.2 41.6 V43.4" stroke="#636363" stroke-width="0.35"/>
<path d="M318.1 40.6 V43.4" stroke="#636363" stroke-width="0.35"/>
<path d="M323.9 41.6 V43.4" stroke="#636363" stroke-width="0.35"/>
<path d="M329.8 36.6 V43.4" stroke="#6c6c6c" stroke-width="0.4"/>
<text x="330.7" y="41" font-size="3.3" fill="#9c9c9c" font-family="Liberation Sans,sans-serif">16</text>
<path d="M335.6 41.6 V43.4" stroke="#636363" stroke-width="0.35"/>
<path d="M341.5 40.6 V43.4" stroke="#636363" stroke-width="0.35"/>
<path d="M347.3 41.6 V43.4" stroke="#636363" stroke-width="0.35"/>
<path d="M353.2 36.6 V43.4" stroke="#6c6c6c" stroke-width="0.4"/>
<text x="354.1" y="41" font-size="3.3" fill="#9c9c9c" font-family="Liberation Sans,sans-serif">18</text>
<path d="M359.0 41.6 V43.4" stroke="#636363" stroke-width="0.35"/>
<path d="M364.9 40.6 V43.4" stroke="#636363" stroke-width="0.35"/>
<path d="M370.7 41.6 V43.4" stroke="#636363" stroke-width="0.35"/>
<path d="M376.6 36.6 V43.4" stroke="#6c6c6c" stroke-width="0.4"/>
<text x="377.5" y="41" font-size="3.3" fill="#9c9c9c" font-family="Liberation Sans,sans-serif">20</text>
<path d="M382.4 41.6 V43.4" stroke="#636363" stroke-width="0.35"/>
<path d="M388.3 40.6 V43.4" stroke="#636363" stroke-width="0.35"/>
<path d="M394.1 41.6 V43.4" stroke="#636363" stroke-width="0.35"/>
<path d="M400.0 36.6 V43.4" stroke="#6c6c6c" stroke-width="0.4"/>
<text x="400.9" y="41" font-size="3.3" fill="#9c9c9c" font-family="Liberation Sans,sans-serif">22</text>
<path d="M405.8 41.6 V43.4" stroke="#636363" stroke-width="0.35"/>
<path d="M411.7 40.6 V43.4" stroke="#636363" stroke-width="0.35"/>
<path d="M417.5 41.6 V43.4" stroke="#636363" stroke-width="0.35"/>
<path d="M423.4 36.6 V43.4" stroke="#6c6c6c" stroke-width="0.4"/>
<text x="424.3" y="41" font-size="3.3" fill="#9c9c9c" font-family="Liberation Sans,sans-serif">24</text>
<path d="M429.2 41.6 V43.4" stroke="#636363" stroke-width="0.35"/>
<path d="M435.1 40.6 V43.4" stroke="#636363" stroke-width="0.35"/>
<path d="M440.9 41.6 V43.4" stroke="#636363" stroke-width="0.35"/>
<path d="M446.8 36.6 V43.4" stroke="#6c6c6c" stroke-width="0.4"/>
<text x="447.7" y="41" font-size="3.3" fill="#9c9c9c" font-family="Liberation Sans,sans-serif">26</text>
<path d="M452.6 41.6 V43.4" stroke="#636363" stroke-width="0.35"/>
<path d="M458.5 40.6 V43.4" stroke="#636363" stroke-width="0.35"/>
<path d="M464.3 41.6 V43.4" stroke="#636363" stroke-width="0.35"/>
<path d="M470.2 36.6 V43.4" stroke="#6c6c6c" stroke-width="0.4"/>
<text x="471.1" y="41" font-size="3.3" fill="#9c9c9c" font-family="Liberation Sans,sans-serif">28</text>
<path d="M476.0 41.6 V43.4" stroke="#636363" stroke-width="0.35"/>
<path d="M481.9 40.6 V43.4" stroke="#636363" stroke-width="0.35"/>
<path d="M487.7 41.6 V43.4" stroke="#636363" stroke-width="0.35"/>
<path d="M493.6 36.6 V43.4" stroke="#6c6c6c" stroke-width="0.4"/>
<text x="494.5" y="41" font-size="3.3" fill="#9c9c9c" font-family="Liberation Sans,sans-serif">30</text>
<path d="M499.4 41.6 V43.4" stroke="#636363" stroke-width="0.35"/>
<path d="M505.3 40.6 V43.4" stroke="#636363" stroke-width="0.35"/>
<path d="M511.1 41.6 V43.4" stroke="#636363" stroke-width="0.35"/>
<path d="M517.0 36.6 V43.4" stroke="#6c6c6c" stroke-width="0.4"/>
<text x="517.9" y="41" font-size="3.3" fill="#9c9c9c" font-family="Liberation Sans,sans-serif">32</text>
<path d="M522.8 41.6 V43.4" stroke="#636363" stroke-width="0.35"/>
<path d="M528.7 40.6 V43.4" stroke="#636363" stroke-width="0.35"/>
<path d="M534.5 41.6 V43.4" stroke="#636363" stroke-width="0.35"/>
<path d="M540.4 36.6 V43.4" stroke="#6c6c6c" stroke-width="0.4"/>
<text x="541.3" y="41" font-size="3.3" fill="#9c9c9c" font-family="Liberation Sans,sans-serif">34</text>
<path d="M546.2 41.6 V43.4" stroke="#636363" stroke-width="0.35"/>
<path d="M552.1 40.6 V43.4" stroke="#636363" stroke-width="0.35"/>
<path d="M557.9 41.6 V43.4" stroke="#636363" stroke-width="0.35"/>
<path d="M563.8 36.6 V43.4" stroke="#6c6c6c" stroke-width="0.4"/>
<text x="564.7" y="41" font-size="3.3" fill="#9c9c9c" font-family="Liberation Sans,sans-serif">36</text>
<path d="M569.6 41.6 V43.4" stroke="#636363" stroke-width="0.35"/>
<path d="M575.5 40.6 V43.4" stroke="#636363" stroke-width="0.35"/>
<path d="M581.3 41.6 V43.4" stroke="#636363" stroke-width="0.35"/>
<path d="M587.2 36.6 V43.4" stroke="#6c6c6c" stroke-width="0.4"/>
<text x="588.1" y="41" font-size="3.3" fill="#9c9c9c" font-family="Liberation Sans,sans-serif">38</text>
<path d="M593.0 41.6 V43.4" stroke="#636363" stroke-width="0.35"/>
<path d="M598.9 40.6 V43.4" stroke="#636363" stroke-width="0.35"/>
<path d="M604.7 41.6 V43.4" stroke="#636363" stroke-width="0.35"/>
<path d="M610.6 36.6 V43.4" stroke="#6c6c6c" stroke-width="0.4"/>
<text x="611.5" y="41" font-size="3.3" fill="#9c9c9c" font-family="Liberation Sans,sans-serif">40</text>
<path d="M616.4 41.6 V43.4" stroke="#636363" stroke-width="0.35"/>
<path d="M21 44.9 H22.8" stroke="#636363" stroke-width="0.35"/>
<path d="M16 50.8 H22.8" stroke="#6c6c6c" stroke-width="0.4"/>
<text x="17" y="54.4" font-size="3.3" fill="#9c9c9c" font-family="Liberation Sans,sans-serif">0</text>
<path d="M21 56.6 H22.8" stroke="#636363" stroke-width="0.35"/>
<path d="M20 62.5 H22.8" stroke="#636363" stroke-width="0.35"/>
<path d="M21 68.3 H22.8" stroke="#636363" stroke-width="0.35"/>
<path d="M16 74.2 H22.8" stroke="#6c6c6c" stroke-width="0.4"/>
<text x="17" y="77.8" font-size="3.3" fill="#9c9c9c" font-family="Liberation Sans,sans-serif">2</text>
<path d="M21 80.0 H22.8" stroke="#636363" stroke-width="0.35"/>
<path d="M20 85.9 H22.8" stroke="#636363" stroke-width="0.35"/>
<path d="M21 91.7 H22.8" stroke="#636363" stroke-width="0.35"/>
<path d="M16 97.6 H22.8" stroke="#6c6c6c" stroke-width="0.4"/>
<text x="17" y="101.2" font-size="3.3" fill="#9c9c9c" font-family="Liberation Sans,sans-serif">4</text>
<path d="M21 103.4 H22.8" stroke="#636363" stroke-width="0.35"/>
<path d="M20 109.3 H22.8" stroke="#636363" stroke-width="0.35"/>
<path d="M21 115.1 H22.8" stroke="#636363" stroke-width="0.35"/>
<path d="M16 121.0 H22.8" stroke="#6c6c6c" stroke-width="0.4"/>
<text x="17" y="124.6" font-size="3.3" fill="#9c9c9c" font-family="Liberation Sans,sans-serif">6</text>
<path d="M21 126.8 H22.8" stroke="#636363" stroke-width="0.35"/>
<path d="M20 132.7 H22.8" stroke="#636363" stroke-width="0.35"/>
<path d="M21 138.6 H22.8" stroke="#636363" stroke-width="0.35"/>
<path d="M16 144.4 H22.8" stroke="#6c6c6c" stroke-width="0.4"/>
<text x="17" y="148.0" font-size="3.3" fill="#9c9c9c" font-family="Liberation Sans,sans-serif">8</text>
<path d="M21 150.2 H22.8" stroke="#636363" stroke-width="0.35"/>
<path d="M20 156.1 H22.8" stroke="#636363" stroke-width="0.35"/>
<path d="M21 161.9 H22.8" stroke="#636363" stroke-width="0.35"/>
<path d="M16 167.8 H22.8" stroke="#6c6c6c" stroke-width="0.4"/>
<text x="17" y="171.4" font-size="3.3" fill="#9c9c9c" font-family="Liberation Sans,sans-serif">1</text>
<text x="17" y="174.7" font-size="3.3" fill="#9c9c9c" font-family="Liberation Sans,sans-serif">0</text>
<path d="M21 173.7 H22.8" stroke="#636363" stroke-width="0.35"/>
<path d="M20 179.5 H22.8" stroke="#636363" stroke-width="0.35"/>
<path d="M21 185.4 H22.8" stroke="#636363" stroke-width="0.35"/>
<path d="M16 191.2 H22.8" stroke="#6c6c6c" stroke-width="0.4"/>
<text x="17" y="194.8" font-size="3.3" fill="#9c9c9c" font-family="Liberation Sans,sans-serif">1</text>
<text x="17" y="198.1" font-size="3.3" fill="#9c9c9c" font-family="Liberation Sans,sans-serif">2</text>
<path d="M21 197.1 H22.8" stroke="#636363" stroke-width="0.35"/>
<path d="M20 202.9 H22.8" stroke="#636363" stroke-width="0.35"/>
<path d="M21 208.8 H22.8" stroke="#636363" stroke-width="0.35"/>
<path d="M16 214.6 H22.8" stroke="#6c6c6c" stroke-width="0.4"/>
<text x="17" y="218.2" font-size="3.3" fill="#9c9c9c" font-family="Liberation Sans,sans-serif">1</text>
<text x="17" y="221.5" font-size="3.3" fill="#9c9c9c" font-family="Liberation Sans,sans-serif">4</text>
<path d="M21 220.5 H22.8" stroke="#636363" stroke-width="0.35"/>
<path d="M20 226.3 H22.8" stroke="#636363" stroke-width="0.35"/>
<path d="M21 232.2 H22.8" stroke="#636363" stroke-width="0.35"/>
<path d="M16 238.0 H22.8" stroke="#6c6c6c" stroke-width="0.4"/>
<text x="17" y="241.6" font-size="3.3" fill="#9c9c9c" font-family="Liberation Sans,sans-serif">1</text>
<text x="17" y="244.9" font-size="3.3" fill="#9c9c9c" font-family="Liberation Sans,sans-serif">6</text>
<path d="M21 243.9 H22.8" stroke="#636363" stroke-width="0.35"/>
<path d="M20 249.7 H22.8" stroke="#636363" stroke-width="0.35"/>
<path d="M21 255.6 H22.8" stroke="#636363" stroke-width="0.35"/>
<path d="M16 261.4 H22.8" stroke="#6c6c6c" stroke-width="0.4"/>
<text x="17" y="265.0" font-size="3.3" fill="#9c9c9c" font-family="Liberation Sans,sans-serif">1</text>
<text x="17" y="268.3" font-size="3.3" fill="#9c9c9c" font-family="Liberation Sans,sans-serif">8</text>
<path d="M21 267.3 H22.8" stroke="#636363" stroke-width="0.35"/>
<path d="M20 273.1 H22.8" stroke="#636363" stroke-width="0.35"/>
<path d="M21 279.0 H22.8" stroke="#636363" stroke-width="0.35"/>
<path d="M16 284.8 H22.8" stroke="#6c6c6c" stroke-width="0.4"/>
<text x="17" y="288.4" font-size="3.3" fill="#9c9c9c" font-family="Liberation Sans,sans-serif">2</text>
<text x="17" y="291.7" font-size="3.3" fill="#9c9c9c" font-family="Liberation Sans,sans-serif">0</text>
<path d="M21 290.7 H22.8" stroke="#636363" stroke-width="0.35"/>
<path d="M20 296.5 H22.8" stroke="#636363" stroke-width="0.35"/>
<path d="M21 302.4 H22.8" stroke="#636363" stroke-width="0.35"/>
<path d="M16 308.2 H22.8" stroke="#6c6c6c" stroke-width="0.4"/>
<text x="17" y="311.8" font-size="3.3" fill="#9c9c9c" font-family="Liberation Sans,sans-serif">2</text>
<text x="17" y="315.1" font-size="3.3" fill="#9c9c9c" font-family="Liberation Sans,sans-serif">2</text>
<path d="M21 314.1 H22.8" stroke="#636363" stroke-width="0.35"/>
<path d="M20 319.9 H22.8" stroke="#636363" stroke-width="0.35"/>
<path d="M21 325.8 H22.8" stroke="#636363" stroke-width="0.35"/>
<path d="M16 331.6 H22.8" stroke="#6c6c6c" stroke-width="0.4"/>
<text x="17" y="335.2" font-size="3.3" fill="#9c9c9c" font-family="Liberation Sans,sans-serif">2</text>
<text x="17" y="338.5" font-size="3.3" fill="#9c9c9c" font-family="Liberation Sans,sans-serif">4</text>
<path d="M21 337.4 H22.8" stroke="#636363" stroke-width="0.35"/>
<path d="M20 343.3 H22.8" stroke="#636363" stroke-width="0.35"/>
<path d="M21 349.1 H22.8" stroke="#636363" stroke-width="0.35"/>
<path d="M16 355.0 H22.8" stroke="#6c6c6c" stroke-width="0.4"/>
<text x="17" y="358.6" font-size="3.3" fill="#9c9c9c" font-family="Liberation Sans,sans-serif">2</text>
<text x="17" y="361.9" font-size="3.3" fill="#9c9c9c" font-family="Liberation Sans,sans-serif">6</text>
<path d="M21 360.8 H22.8" stroke="#636363" stroke-width="0.35"/>
<path d="M20 366.7 H22.8" stroke="#636363" stroke-width="0.35"/>
<path d="M21 372.5 H22.8" stroke="#636363" stroke-width="0.35"/>
<path d="M16 378.4 H22.8" stroke="#6c6c6c" stroke-width="0.4"/>
<text x="17" y="382.0" font-size="3.3" fill="#9c9c9c" font-family="Liberation Sans,sans-serif">2</text>
<text x="17" y="385.3" font-size="3.3" fill="#9c9c9c" font-family="Liberation Sans,sans-serif">8</text>
<path d="M21 384.2 H22.8" stroke="#636363" stroke-width="0.35"/>
<path d="M20 390.1 H22.8" stroke="#636363" stroke-width="0.35"/>
<path d="M21 395.9 H22.8" stroke="#636363" stroke-width="0.35"/>
<path d="M16 401.8 H22.8" stroke="#6c6c6c" stroke-width="0.4"/>
<text x="17" y="405.4" font-size="3.3" fill="#9c9c9c" font-family="Liberation Sans,sans-serif">3</text>
<text x="17" y="408.7" font-size="3.3" fill="#9c9c9c" font-family="Liberation Sans,sans-serif">0</text>
</svg>
<div class="abs" style="left:15.6px;top:36.2px;width:7.4px;height:7.4px;background:#4d4d4d;border-right:0.5px solid #333;border-bottom:0.5px solid #333"></div>
<div class="abs" id="menubar"></div>
<div class="abs" id="optbar"></div>
<div class="abs" id="tabbar"></div>
<div class="abs" id="tab"></div>
<div class="abs" style="left:3.6px;top:1.9px;width:6.9px;height:6.3px;border-radius:1.3px;background:#0a2538;border:0.7px solid #2a8cc4"></div>
<div class="t" style="left:4.6px;top:4.23px;font-size:3.8px;color:#3aa6e0;font-weight:bold;letter-spacing:-0.15px">Ps</div>
<div class="t" style="left:18.2px;top:4.01px;font-size:4.9px;color:#dedede;font-weight:500">文件<span style="font-size:3.9px">(F)</span></div>
<div class="t" style="left:39.7px;top:4.01px;font-size:4.9px;color:#dedede;font-weight:500">编辑<span style="font-size:3.9px">(E)</span></div>
<div class="t" style="left:61.2px;top:4.01px;font-size:4.9px;color:#dedede;font-weight:500">图像<span style="font-size:3.9px">(I)</span></div>
<div class="t" style="left:81.4px;top:4.01px;font-size:4.9px;color:#dedede;font-weight:500">图层<span style="font-size:3.9px">(L)</span></div>
<div class="t" style="left:102.5px;top:4.01px;font-size:4.9px;color:#dedede;font-weight:500">文字<span style="font-size:3.9px">(Y)</span></div>
<div class="t" style="left:124.2px;top:4.01px;font-size:4.9px;color:#dedede;font-weight:500">选择<span style="font-size:3.9px">(S)</span></div>
<div class="t" style="left:145.7px;top:4.01px;font-size:4.9px;color:#dedede;font-weight:500">滤镜<span style="font-size:3.9px">(T)</span></div>
<div class="t" style="left:167.2px;top:4.01px;font-size:4.9px;color:#dedede;font-weight:500">3D<span style="font-size:3.9px">(D)</span></div>
<div class="t" style="left:184.5px;top:4.01px;font-size:4.9px;color:#dedede;font-weight:500">视图<span style="font-size:3.9px">(V)</span></div>
<div class="t" style="left:206.5px;top:4.01px;font-size:4.9px;color:#dedede;font-weight:500">窗口<span style="font-size:3.9px">(W)</span></div>
<div class="t" style="left:229.5px;top:4.01px;font-size:4.9px;color:#dedede;font-weight:500">帮助<span style="font-size:3.9px">(H)</span></div>
<svg class="abs" style="left:0;top:0" width="760" height="44" viewBox="0 0 760 44" fill="none" stroke="#d8d8d8" stroke-width="0.6"><path d="M721 5 H725"/><rect x="732.2" y="3.8" width="3.2" height="2.6"/><path d="M733.4 3.8 V2.8 H736.6 V5.4 H735.4"/><path d="M747.4 2.6 L751 6.2 M751 2.6 L747.4 6.2" stroke-width="0.7"/><path d="M7.6 19.2 L10.9 15.9 L14.2 19.2 H13.4 V22 H11.7 V20 H10.1 V22 H8.4 V19.2 Z" fill="#e4e4e4" stroke="#e4e4e4" stroke-width="0.5" stroke-linejoin="round"/><path d="M27.5 15.6 V21.8 M24.4 18.7 H30.6 M26.5 16.6 L27.5 15.6 L28.5 16.6 M26.5 20.8 L27.5 21.8 L28.5 20.8 M25.4 17.7 L24.4 18.7 L25.4 19.7 M29.6 17.7 L30.6 18.7 L29.6 19.7" stroke="#dcdcdc" stroke-width="0.7"/><path d="M34.8 18.2 L35.9 19.3 L37 18.2" stroke="#aaa" stroke-width="0.5"/><rect x="42.8" y="16.2" width="4.4" height="4.4" rx="0.5" fill="#d8d8d8" stroke="none"/><path d="M43.8 18.4 L44.8 19.5 L46.4 17.2" stroke="#444" stroke-width="0.7"/><rect x="79.2" y="14.6" width="18.4" height="7.6" rx="0.8" fill="#454545" stroke="#666" stroke-width="0.4"/><path d="M93.2 18 L94.4 19.2 L95.6 18" stroke="#c0c0c0" stroke-width="0.5"/><rect x="105" y="16.4" width="4" height="4" rx="0.4" stroke="#a0a0a0" stroke-width="0.5"/><g stroke="#bdbdbd" stroke-width="0.6"><path d="M153.4 15.6 V21.8 M154.4 17.2 H158.4 M154.4 20 H157"/><path d="M166.8 15.6 V21.8 M164.4 17.2 H169.2 M165.2 20 H168.4"/><path d="M180.6 15.6 V21.8 M175.6 17.2 H179.6 M177 20 H179.6"/><path d="M204.8 15.8 H210 M206 16.8 V21.4 M208.6 16.8 V19.8"/><path d="M215.4 18.6 H221 M217 16 V21.4 M219.4 16.8 V20.4"/><path d="M226.4 21.6 H231.6 M227.8 16 V20.6 M230.2 17.6 V20.6"/><path d="M240 15.8 V21.8 M244.2 15.8 V21.8 M242.1 17 V20.6"/></g><g fill="#d0d0d0" stroke="none"><circle cx="255" cy="18.8" r="0.6"/><circle cx="257" cy="18.8" r="0.6"/><circle cx="259" cy="18.8" r="0.6"/></g><g stroke="#8c8c8c" stroke-width="0.6"><ellipse cx="299.4" cy="18.8" rx="3" ry="1.6"/><path d="M301 17 L302.6 18 L301 19"/><circle cx="310" cy="18.8" r="2.6"/><ellipse cx="310" cy="18.8" rx="2.6" ry="1"/><path d="M319.8 15.6 V22 M316.6 18.8 H323 M318.6 16.8 L319.8 15.6 L321 16.8 M318.6 20.8 L319.8 22 L321 20.8 M317.8 17.6 L316.6 18.8 L317.8 20 M321.8 17.6 L323 18.8 L321.8 20"/><path d="M330.4 15.8 V21.8 M327.4 18.8 H333.4 M329.4 16.8 L330.4 15.8 L331.4 16.8 M329.4 20.8 L330.4 21.8 L331.4 20.8"/><circle cx="330.4" cy="18.8" r="1"/><path d="M337 17.8 H340.4 V19.8 H337 Z M340.4 18.8 L342.4 17.4 V20.2 Z" fill="#8c8c8c"/></g><circle cx="722.6" cy="18" r="1.8" stroke="#d8d8d8" stroke-width="0.7"/><path d="M723.9 19.4 L725.6 21.1" stroke="#d8d8d8" stroke-width="0.8"/><rect x="731.4" y="16" width="6" height="5" stroke="#d8d8d8" stroke-width="0.6"/><path d="M733.2 16 V21" stroke="#d8d8d8" stroke-width="0.6"/><path d="M741.6 18 L742.6 19 L743.6 18" stroke="#aaa" stroke-width="0.5"/><path d="M749.4 17.4 V21.6 H754.8 V17.4 M752.1 19.6 V15 M750.7 16.4 L752.1 15 L753.5 16.4" stroke="#e0e0e0" stroke-width="0.7"/></svg>
<div class="t" style="left:50.4px;top:16.68px;font-size:4.75px;color:#dadada;font-weight:500">自动选择:</div>
<div class="t" style="left:81.4px;top:16.68px;font-size:4.75px;color:#dedede;font-weight:500">图层</div>
<div class="t" style="left:112.8px;top:16.68px;font-size:4.75px;color:#dadada;font-weight:500">显示变换控件</div>
<div class="t" style="left:271.4px;top:16.68px;font-size:4.75px;color:#808080;">3D 模式:</div>
<div class="t" style="left:21.2px;top:30.35px;font-size:4.6px;color:#d6d6d6;">未标题-1 @ 50% (底图线稿, RGB/8) *</div>
<div class="t" style="left:104.4px;top:29.57px;font-size:5.2px;color:#c8c8c8;">×</div>
<div class="abs" id="toolbar"></div>
<svg class="abs" style="left:0;top:0" width="24" height="412" viewBox="0 0 24 412" fill="none" stroke="#c8c8c8" stroke-width="0.7">
<rect x="0" y="26.2" width="15.3" height="4.6" fill="#424242" stroke="none"/>
<path d="M3.4 27.6 L4.4 28.6 L3.4 29.6 M5.2 27.6 L6.2 28.6 L5.2 29.6" stroke="#b0b0b0" stroke-width="0.45"/>
<rect x="2.2" y="36.8" width="11" height="10" rx="0.8" fill="#2e2e2e" stroke="none"/>
<g transform="translate(7.7 41.8) scale(0.8) translate(-7.7 -41.8)"><path d="M7.7 38.2 V45.4 M4.1 41.8 H11.3 M6.6 39.3 L7.7 38.2 L8.8 39.3 M6.6 44.3 L7.7 45.4 L8.8 44.3 M5.2 40.7 L4.1 41.8 L5.2 42.9 M10.2 40.7 L11.3 41.8 L10.2 42.9" stroke="#f0f0f0"/></g>
<g transform="translate(7.7 52.9) scale(0.8) translate(-7.7 -52.9)"><rect x="4.4" y="49.8" width="6.6" height="6.2" stroke-dasharray="1.2 0.7"/></g>
<g transform="translate(7.7 62.6) scale(0.8) translate(-7.7 -62.6)"><path d="M4.6 60 L10.6 59.6 L8.6 62.4 L10.8 64.6 L6 64.8 Z M6 64.8 L4.8 66.2"/></g>
<g transform="translate(7.7 73) scale(0.8) translate(-7.7 -73)"><path d="M4.6 76.4 L9 71.8" stroke-width="1.1"/><path d="M10.4 69.4 V71 M10.4 72.6 V73.6 M8.6 71.4 H9.4 M11.2 71.4 H12.2" stroke-width="0.5"/></g>
<g transform="translate(7.7 83.4) scale(0.8) translate(-7.7 -83.4)"><path d="M5.6 79.4 V86 H11.6 M3.8 81.2 H9.8 V87.6"/></g>
<g transform="translate(7.7 93.2) scale(0.8) translate(-7.7 -93.2)"><rect x="4.4" y="90" width="6.6" height="6.4"/><path d="M4.4 90 L11 96.4 M11 90 L4.4 96.4" stroke-width="0.5"/></g>
<g transform="translate(7.7 103.6) scale(0.8) translate(-7.7 -103.6)"><path d="M4.4 107.2 L5 105.4 L8.6 101.8 L9.8 103 L6.2 106.6 Z" stroke-width="0.6"/><path d="M8.8 101.2 L10.2 99.8 L11.6 101.2 L10.2 102.6" fill="#d4d4d4" stroke-width="0.5"/></g>
<g transform="translate(7.7 114) scale(0.8) translate(-7.7 -114)"><path d="M4.6 115.6 L9.4 110.8 L11.4 112.8 L6.6 117.6 Z" fill="#c8c8c8" stroke-width="0.5"/><path d="M6 114.6 L7.6 116.2 M7.8 112.8 L9.4 114.4" stroke="#535353" stroke-width="0.5"/></g>
<g transform="translate(7.7 124.4) scale(0.8) translate(-7.7 -123.8)"><path d="M11.2 120 L7.4 124.6" stroke-width="1.1"/><path d="M6.8 125 C6.4 126.8 5.2 127.2 4.4 127.2 C5.4 126.2 5 125.2 6 124.4 Z" fill="#d4d4d4" stroke-width="0.4"/></g>
<g transform="translate(7.7 134.8) scale(0.8) translate(-7.7 -134.2)"><path d="M4.4 138 H11 M5 136.6 H10.4 V135.2 H8.8 V133 C9.6 132 9.2 130.4 7.7 130.4 C6.2 130.4 5.8 132 6.6 133 V135.2 H5 Z" fill="#cfcfcf" stroke-width="0.4"/></g>
<g transform="translate(7.7 144.6) scale(0.8) translate(-7.7 -144)"><path d="M11 140.6 L7.6 144.8" stroke-width="1"/><path d="M7 145.2 C6.6 146.8 5.6 147.2 4.6 147.2 C5.6 146.4 5.4 145.4 6.2 144.8 Z" fill="#d4d4d4" stroke-width="0.4"/><path d="M4.2 142.8 C4.2 141 5.4 140.2 6.6 140.4" stroke-width="0.5"/></g>
<g transform="translate(7.7 154.8) scale(0.8) translate(-7.7 -154.8)"><path d="M4.4 155.8 L8.4 151.6 L11.2 154.2 L8.6 157 H6 Z" fill="#cfcfcf" stroke-width="0.4"/><path d="M4.4 158 H11.4" stroke-width="0.5"/></g>
<g transform="translate(7.7 164.8) scale(0.8) translate(-7.7 -164.8)"><rect x="4.2" y="161.8" width="7" height="6" stroke-width="0.6"/><rect x="4.2" y="161.8" width="3.4" height="6" fill="#d4d4d4" stroke="none"/></g>
<g transform="translate(7.7 175.2) scale(0.8) translate(-7.7 -175.2)"><path d="M7.7 171.4 C9 173.6 10.2 174.8 10.2 176.4 C10.2 177.8 9.1 178.8 7.7 178.8 C6.3 178.8 5.2 177.8 5.2 176.4 C5.2 174.8 6.4 173.6 7.7 171.4 Z" fill="#d4d4d4" stroke="none"/></g>
<g transform="translate(7.7 185.6) scale(0.8) translate(-7.7 -185.6)"><circle cx="8.6" cy="183.6" r="2.3" fill="#d4d4d4" stroke="none"/><path d="M7 185.4 L4.8 188.4" stroke-width="1"/></g>
<g transform="translate(7.7 197.0) scale(0.8) translate(-7.7 -195.6)"><path d="M4.6 199 L5.6 195.2 L9 192 L11.4 194.4 L8.2 197.8 Z" stroke-width="0.6"/><path d="M4.6 199 L7.4 196.2" stroke-width="0.5"/></g>
<g transform="translate(7.7 206.4) scale(0.8) translate(-7.7 -205.8)"><path d="M4.8 203.4 V202.4 H10.8 V203.4 M7.8 202.4 V209.2 M6.6 209.2 H9" stroke-width="0.9"/></g>
<g transform="translate(7.7 216.2) scale(0.8) translate(-7.7 -216.2)"><path d="M6 212 V219.4 L7.8 217.6 L9 220.2 L9.9 219.8 L8.7 217.2 H11 Z" fill="#e0e0e0" stroke="none"/></g>
<g transform="translate(7.7 226.5) scale(0.8) translate(-7.7 -226.5)"><rect x="4.4" y="223.6" width="6.8" height="5.8" stroke-width="0.7"/></g>
<g transform="translate(7.7 237.6) scale(0.8) translate(-7.7 -237)"><path d="M5.6 240.6 C4.4 238.8 4.6 237.4 5.6 237.6 L6 238.2 V234.6 C6 233.8 7 233.8 7 234.6 V233.8 C7 233 8.2 233 8.2 233.8 V234.4 C8.2 233.6 9.4 233.6 9.4 234.4 V235.4 C9.4 234.8 10.4 234.8 10.4 235.6 V238.6 C10.4 239.8 10 240.2 9.6 240.8 Z" fill="#d8d8d8" stroke="none"/></g>
<g transform="translate(7.7 248.2) scale(0.8) translate(-7.7 -247)"><circle cx="7.2" cy="245.8" r="2.4" stroke-width="0.8"/><path d="M9 247.8 L11.2 250.2" stroke-width="1"/></g>
<g fill="#c8c8c8" stroke="none"><circle cx="5.8" cy="257.4" r="0.55"/><circle cx="7.7" cy="257.4" r="0.55"/><circle cx="9.6" cy="257.4" r="0.55"/></g>
<rect x="3.4" y="264.8" width="2.2" height="2.2" fill="#111" stroke="#ddd" stroke-width="0.3"/><rect x="4.6" y="266" width="2.2" height="2.2" fill="#fff" stroke="none"/>
<path d="M9 265.4 Q11.4 265.2 11.4 267.8 M9.8 264.6 L9 265.4 L9.8 266.2 M10.6 267 L11.4 267.8 L12.2 267" stroke-width="0.4"/>
<rect x="6.4" y="277" width="6.2" height="6.4" fill="#ffffff" stroke="#888" stroke-width="0.3"/>
<rect x="2.5" y="272.6" width="6.2" height="6.4" fill="#aeb6d0" stroke="#e8e8e8" stroke-width="0.4"/>
<rect x="4.2" y="287.8" width="7" height="5.4" rx="0.6" stroke-width="0.6"/><circle cx="7.7" cy="290.5" r="1.3" stroke-width="0.5" stroke-dasharray="0.6 0.4"/>
<rect x="5.6" y="297.8" width="5.6" height="4.4" stroke-width="0.6"/><path d="M4.2 299.8 V303.8 H9.4" stroke-width="0.6"/>
<path d="M12.2 56.6 L13.2 56.6 L13.2 55.6 Z" fill="#bdbdbd" stroke="none"/>
<path d="M12.2 66.6 L13.2 66.6 L13.2 65.6 Z" fill="#bdbdbd" stroke="none"/>
<path d="M12.2 77.4 L13.2 77.4 L13.2 76.4 Z" fill="#bdbdbd" stroke="none"/>
<path d="M12.2 87.8 L13.2 87.8 L13.2 86.8 Z" fill="#bdbdbd" stroke="none"/>
<path d="M12.2 108 L13.2 108 L13.2 107 Z" fill="#bdbdbd" stroke="none"/>
<path d="M12.2 118 L13.2 118 L13.2 117 Z" fill="#bdbdbd" stroke="none"/>
<path d="M12.2 128 L13.2 128 L13.2 127 Z" fill="#bdbdbd" stroke="none"/>
<path d="M12.2 138.6 L13.2 138.6 L13.2 137.6 Z" fill="#bdbdbd" stroke="none"/>
<path d="M12.2 148.6 L13.2 148.6 L13.2 147.6 Z" fill="#bdbdbd" stroke="none"/>
<path d="M12.2 159 L13.2 159 L13.2 158 Z" fill="#bdbdbd" stroke="none"/>
<path d="M12.2 169 L13.2 169 L13.2 168 Z" fill="#bdbdbd" stroke="none"/>
<path d="M12.2 179.4 L13.2 179.4 L13.2 178.4 Z" fill="#bdbdbd" stroke="none"/>
<path d="M12.2 189.4 L13.2 189.4 L13.2 188.4 Z" fill="#bdbdbd" stroke="none"/>
<path d="M12.2 199.8 L13.2 199.8 L13.2 198.8 Z" fill="#bdbdbd" stroke="none"/>
<path d="M12.2 210 L13.2 210 L13.2 209 Z" fill="#bdbdbd" stroke="none"/>
<path d="M12.2 220.4 L13.2 220.4 L13.2 219.4 Z" fill="#bdbdbd" stroke="none"/>
<path d="M12.2 230.4 L13.2 230.4 L13.2 229.4 Z" fill="#bdbdbd" stroke="none"/>
<path d="M12.2 240.8 L13.2 240.8 L13.2 239.8 Z" fill="#bdbdbd" stroke="none"/>
<path d="M12.2 250.8 L13.2 250.8 L13.2 249.8 Z" fill="#bdbdbd" stroke="none"/>
</svg>
<div class="abs" id="status"></div>
<div class="abs" style="left:15.6px;top:404.2px;width:19px;height:7.2px;background:#494949"></div>
<div class="t" style="left:21px;top:406.13px;font-size:4px;color:#d8d8d8;">50%</div>
<div class="t" style="left:51px;top:405.98px;font-size:3.9px;color:#c8c8c8;letter-spacing:0.42px">文档:12.4M/24.9M</div>
<div class="t" style="left:103.6px;top:405.55px;font-size:4.6px;color:#c8c8c8;">›</div>
<div class="abs" id="panel"></div>
<div class="abs" id="rstrip"></div>
<div class="abs" style="left:622.9px;top:51.4px;width:135.4px;height:37px;background:#515151"></div>
<div class="abs" style="left:622.9px;top:36.2px;width:135.4px;height:5.4px;background:#3d3d3d"></div>
<div class="abs" style="left:622.9px;top:41.6px;width:135.4px;height:9.8px;background:#424242;border-bottom:0.5px solid #383838"></div>
<div class="abs" style="left:623.4px;top:43.6px;width:16.4px;height:8px;background:#4f4f4f"></div>
<div class="t" style="left:626.6px;top:46.08px;font-size:4.75px;color:#f0f0f0;">图层</div>
<div class="t" style="left:643.6px;top:46.08px;font-size:4.75px;color:#a8a8a8;">通道</div>
<div class="t" style="left:661.4px;top:46.08px;font-size:4.75px;color:#a8a8a8;">路径</div>
<div class="abs" style="left:622.9px;top:333.8px;width:135.4px;height:15.4px;background:#515151"></div>
<svg class="abs" style="left:0;top:0" width="760" height="427" viewBox="0 0 760 427" fill="none" stroke="#d0d0d0" stroke-width="0.6">
<path d="M747.4 38 L746.4 39 L747.4 40 M749 38 L748 39 L749 40" stroke="#c0c0c0" stroke-width="0.5"/>
<path d="M754.6 38 L755.8 39.6 M755.8 38 L754.6 39.6" stroke="#c0c0c0" stroke-width="0.5"/>
<path d="M753 46 H756.4 M753 47.2 H756.4 M753 48.4 H756.4" stroke="#b8b8b8" stroke-width="0.45"/>
<rect x="626" y="57" width="31.6" height="7.6" rx="0.8" fill="#454545" stroke="#666" stroke-width="0.35"/>
<circle cx="629.2" cy="60.6" r="1.3" stroke-width="0.55"/><path d="M630.2 61.6 L631.4 62.8" stroke-width="0.6"/>
<path d="M653 60 L654.1 61.1 L655.2 60" stroke="#aaa" stroke-width="0.45"/>
<rect x="665" y="58" width="4.6" height="4" stroke-width="0.6"/><path d="M665.4 61.4 L666.8 59.8 L667.8 60.8 L668.6 60 L669.4 61.4" stroke-width="0.4"/>
<circle cx="676" cy="60.2" r="2.1" stroke-width="0.6"/><path d="M676 58.1 A2.1 2.1 0 0 1 676 62.3 Z" fill="#d0d0d0" stroke="none"/>
<path d="M684.2 58.6 V58 H688.6 V58.6 M686.4 58 V62.6 M685.6 62.6 H687.2" stroke-width="0.8"/>
<rect x="693.6" y="58.2" width="4" height="4" stroke-width="0.6"/><g fill="#d8d8d8" stroke="none"><rect x="693" y="57.6" width="1.2" height="1.2"/><rect x="697" y="57.6" width="1.2" height="1.2"/><rect x="693" y="61.6" width="1.2" height="1.2"/><rect x="697" y="61.6" width="1.2" height="1.2"/></g>
<path d="M703.6 57.6 H706.4 L707.8 59 V63 H703.6 Z" stroke-width="0.6"/><rect x="704.6" y="60.4" width="2" height="1.6" fill="#d0d0d0" stroke="none"/>
<circle cx="715.2" cy="58.4" r="1.2" fill="#f0f0f0" stroke="none"/>
<rect x="641.2" y="81.4" width="3.8" height="3.8" stroke="#9a9a9a" stroke-width="0.4" stroke-dasharray="0.7 0.5"/>
<path d="M649.4 85.4 L653 81.4" stroke="#c0c0c0" stroke-width="0.7"/>
<path d="M659.6 80.8 V86 M657 83.4 H662.2 M658.8 81.6 L659.6 80.8 L660.4 81.6 M658.8 85.2 L659.6 86 L660.4 85.2 M657.8 82.6 L657 83.4 L657.8 84.2 M661.4 82.6 L662.2 83.4 L661.4 84.2" stroke="#c0c0c0" stroke-width="0.5"/>
<path d="M665.8 81.2 V85.8" stroke="#777" stroke-width="0.4"/>
<rect x="634" y="90.2" width="118.8" height="12.4" fill="#696969" stroke="none"/>
<path d="M627.2 97.1 Q629.6 94.69999999999999 632 97.1 Q629.6 99.5 627.2 97.1 Z" stroke="#d8d8d8" stroke-width="0.5"/><circle cx="629.6" cy="97.1" r="0.8" fill="#d8d8d8" stroke="none"/>
<path d="M627.2 110.1 Q629.6 107.69999999999999 632 110.1 Q629.6 112.5 627.2 110.1 Z" stroke="#d8d8d8" stroke-width="0.5"/><circle cx="629.6" cy="110.1" r="0.8" fill="#d8d8d8" stroke="none"/>
<path d="M627.2 123 Q629.6 120.6 632 123 Q629.6 125.4 627.2 123 Z" stroke="#d8d8d8" stroke-width="0.5"/><circle cx="629.6" cy="123" r="0.8" fill="#d8d8d8" stroke="none"/>
<rect x="635.8" y="90.9" width="14.2" height="11.4" fill="#6b6b6b" stroke="#e8e8e8" stroke-width="0.5"/>
<rect x="637.4" y="92.2" width="11.3" height="8.7" fill="#f2f2f2" stroke="none"/>
<rect x="642.6" y="95.2" width="4.6" height="5.7" fill="#8a8a8a" stroke="none"/>
<rect x="645.8" y="97.60000000000001" width="3.1" height="3.5" fill="#d4d4d4" stroke="#666" stroke-width="0.3"/>
<rect x="637.4" y="105.6" width="11.3" height="8.7" fill="#f2f2f2" stroke="none"/>
<rect x="642.6" y="108.6" width="4.6" height="5.7" fill="#8a8a8a" stroke="none"/>
<rect x="645.8" y="111.0" width="3.1" height="3.5" fill="#d4d4d4" stroke="#666" stroke-width="0.3"/>
<rect x="637.4" y="118.5" width="11.3" height="8.5" fill="#ffffff" stroke="none"/>
<rect x="743.2" y="122" width="2.6" height="2.2" fill="#9a9a9a" stroke="none"/><path d="M743.7 122 V121 A0.8 0.8 0 0 1 745.3 121 V122" stroke="#9a9a9a" stroke-width="0.4"/>
<path d="M743.4 339.2 H748.4 M745 339.2 V338.2 H746.8 V339.2" stroke="#dcdcdc" stroke-width="0.6"/><path d="M744 340 H747.8 V344.2 H744 Z" fill="#d0d0d0" stroke="none"/>
</svg>
<div class="t" style="left:627.6px;top:59.38px;font-size:4.75px;color:#d0d0d0;"></div>
<div class="t" style="left:633.2px;top:60.08px;font-size:4.75px;color:#d8d8d8;">类型</div>
<div class="t" style="left:628px;top:70.98px;font-size:4.75px;color:#d0d0d0;">正常</div>
<div class="t" style="left:628px;top:82.38px;font-size:4.75px;color:#c8c8c8;">锁定:</div>
<div class="t" style="left:653.4px;top:95.58px;font-size:4.75px;color:#f0f0f0;">底图线稿</div>
<div class="t" style="left:653.4px;top:108.98px;font-size:4.75px;color:#d8d8d8;">线稿 1</div>
<div class="t" style="left:653.4px;top:121.88px;font-size:4.75px;color:#d8d8d8;font-style:italic">背景</div>
<div class="abs" style="left:746.6px;top:349.2px;width:6px;height:62.2px;background:#2c2c2c"></div>
<div class="abs" style="left:752.6px;top:349.2px;width:5.8px;height:62.2px;background:#3a3a3a"></div>
<div class="abs" style="left:625.8px;top:67px;width:120.1px;height:171.8px;border:2px solid #f62a2a"></div>
<div class="abs" id="ctx">
<div class="i" style="top:-0.10px">混合选项...</div>
<div class="s" style="top:8.57px"></div>
<div class="i" style="top:11.05px">复制图层...</div>
<div class="i" style="top:17.74px">删除图层</div>
<div class="i" style="top:24.43px">从图层建立组...</div>
<div class="s" style="top:33.10px"></div>
<div class="i" style="top:35.58px">快速导出为 PNG</div>
<div class="i" style="top:42.27px">导出为...</div>
<div class="s" style="top:50.94px"></div>
<div class="i" style="top:53.42px">来自图层的画板...</div>
<div class="i" style="top:60.11px">来自图层的画框...</div>
<div class="s" style="top:68.78px"></div>
<div class="i" style="top:71.26px">转换为智能对象</div>
<div class="i" style="top:77.95px">在资源管理器中显示</div>
<div class="i g" style="top:84.64px">更新修改的内容</div>
<div class="i" style="top:91.33px">更新所有修改的内容</div>
<div class="i" style="top:98.02px">编辑内容</div>
<div class="i" style="top:104.71px">重新链接到文件...</div>
<div class="i" style="top:111.40px">重新链接到库图形...</div>
<div class="i g" style="top:118.09px">转换为图层...</div>
<div class="i" style="top:124.78px">替换内容...</div>
<div class="i" style="top:131.47px">嵌入链接的智能对象</div>
<div class="s" style="top:140.14px"></div>
<div class="hl" style="top:141.87px"></div>
<div class="i" style="top:142.62px;color:#fff">栅格化图层</div>
<div class="i g" style="top:149.31px">栅格化图层样式</div>
<div class="s" style="top:157.98px"></div>
<div class="i g" style="top:160.46px">启用图层蒙版</div>
<div class="i g" style="top:167.15px">启用矢量蒙版</div>
<div class="i" style="top:173.84px">创建剪贴蒙版</div>
<div class="s" style="top:182.51px"></div>
<div class="i g" style="top:184.99px">链接图层</div>
<div class="i g" style="top:191.68px">选择链接图层</div>
<div class="s" style="top:200.35px"></div>
<div class="i g" style="top:202.83px">拷贝图层样式</div>
<div class="i g" style="top:209.52px">粘贴图层样式</div>
<div class="i g" style="top:216.21px">清除图层样式</div>
<div class="s" style="top:224.88px"></div>
<div class="i g" style="top:227.36px">从隔离图层释放</div>
<div class="s" style="top:236.03px"></div>
<div class="i g" style="top:238.51px">合并图层</div>
<div class="i" style="top:245.20px">合并可见图层</div>
<div class="i" style="top:251.89px">拼合图像</div>
<div class="s" style="top:260.56px"></div>
<div class="i" style="top:263.04px">无颜色</div>
<div class="i" style="top:269.73px">红色</div>
<div class="i" style="top:276.42px">橙色</div>
<div class="i" style="top:283.11px">黄色</div>
<div class="i" style="top:289.80px">绿色</div>
<div class="i" style="top:296.49px">蓝色</div>
<div class="i" style="top:303.18px">紫色</div>
<div class="i" style="top:309.87px">灰色</div>
<div class="s" style="top:318.54px"></div>
<div class="i" style="top:321.02px">明信片</div>
<div class="i" style="top:327.71px">从所选图层新建 3D 模型</div>
<div class="i g" style="top:334.40px">从当前选区新建 3D 模型</div>
</div>
<svg class="abs" style="left:700px;top:211px" width="8" height="10" viewBox="0 0 8 10"><path d="M1.2 0.8 V7.4 L2.8 6 L3.9 8.4 L4.9 8 L3.8 5.6 H6 Z" fill="#fff" stroke="#222" stroke-width="0.5"/></svg>
<div class="abs" id="black"></div>
<div class="t" id="wm" style="left:658px;top:411.15px;font-family:'Liberation Sans',sans-serif;font-weight:bold;font-size:11.4px;line-height:14px;color:#bdbdbd;letter-spacing:0.18px">edu.zhulong.com</div>
</body></html>
